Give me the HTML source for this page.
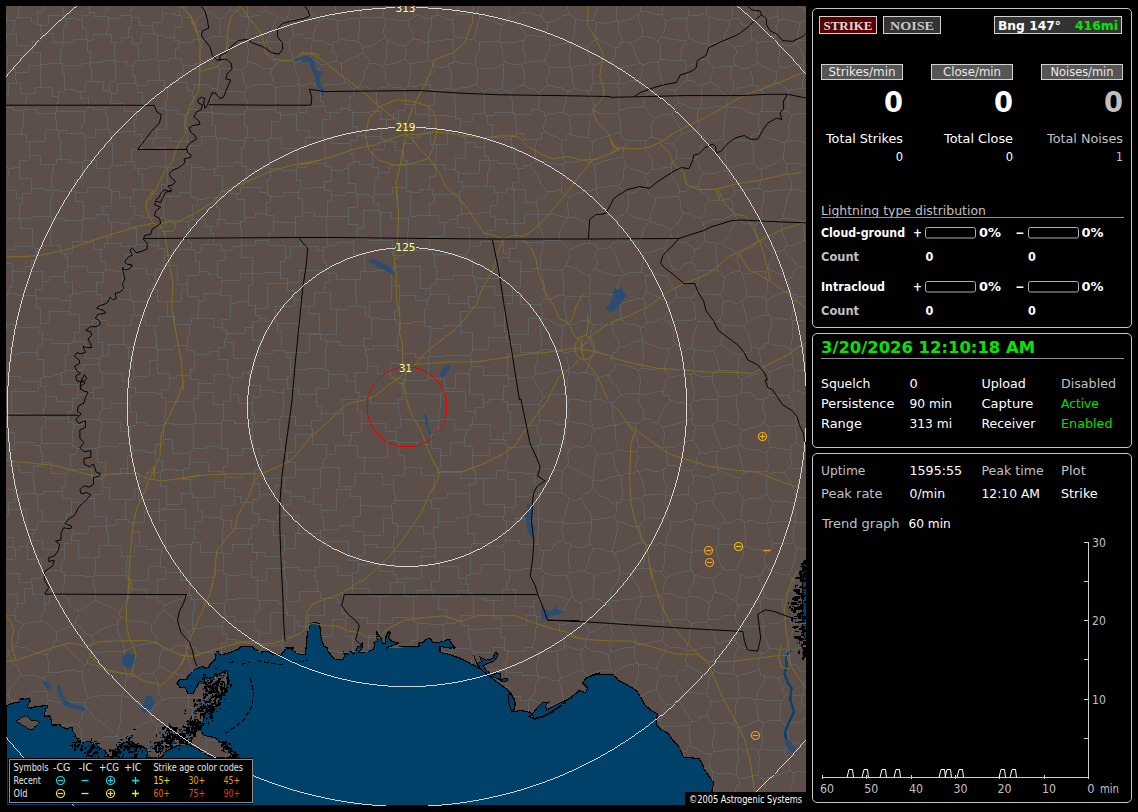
<!DOCTYPE html>
<html><head><meta charset="utf-8"><title>Lightning Map</title>
<style>html,body{margin:0;padding:0;background:#000;overflow:hidden}svg{display:block}text{white-space:pre}</style></head>
<body>
<svg width="1138" height="812" viewBox="0 0 1138 812">
<defs><clipPath id="mapclip"><rect x="6" y="6" width="800" height="800"/></clipPath><mask id="rm" maskUnits="userSpaceOnUse" x="0" y="0" width="812" height="812"><rect width="812" height="812" fill="#fff"/><rect x="395" y="2" width="21" height="10"/><rect x="395" y="123" width="21" height="9"/><rect x="396" y="243" width="20" height="9"/><rect x="399" y="363" width="14" height="9"/></mask></defs>
<rect width="1138" height="812" fill="#000"/>
<g id="map" clip-path="url(#mapclip)" shape-rendering="crispEdges">
<rect x="6" y="6" width="800" height="800" fill="#5c4f4a"/>
<path d="M6.0 706.0 L10.5 703.9 L14.8 702.5 L18.3 702.5 L20.4 699.0 L24.6 699.0 L28.8 698.3 L30.2 701.1 L28.1 704.6 L27.4 707.4 L30.9 708.1 L35.9 706.7 L42.2 706.0 L45.7 705.3 L47.8 705.3 L47.8 707.4 L45.7 708.8 L45.0 713.1 L44.3 715.9 L49.9 715.9 L51.3 720.8 L51.3 725.0 L56.3 725.0 L60.5 724.3 L60.5 726.4 L67.5 729.2 L70.3 727.1 L72.4 727.8 L72.4 731.3 L75.2 734.1 L75.9 737.0 L78.1 740.5 L81.6 742.6 L84.4 743.3 L87.2 741.2 L90.0 741.9 L92.8 743.3 L96.3 744.0 L98.5 747.5 L101.3 748.9 L104.8 750.3 L106.2 753.1 L104.1 756.7 L113.9 756.7 L114.6 750.3 L119.5 747.5 L121.0 744.0 L126.6 741.9 L132.2 741.2 L135.0 744.7 L140.6 745.4 L146.3 748.9 L147.7 753.1 L146.3 757.4 L149.6 757.7 L160.8 757.7 L167.2 750.5 L176.8 745.7 L188.0 744.1 L197.7 748.9 L207.3 755.3 L215.3 757.7 L236.1 757.7 L229.7 752.1 L226.5 744.1 L220.1 742.5 L215.3 737.7 L207.3 736.1 L202.5 734.5 L200.9 726.5 L204.1 716.9 L208.9 710.5 L216.9 704.1 L221.7 696.1 L226.5 688.0 L228.1 678.4 L227.3 670.4 L223.3 672.0 L216.9 675.2 L210.5 678.4 L204.9 677.6 L204.1 683.2 L199.3 681.6 L196.1 688.0 L192.9 693.7 L188.0 693.7 L185.6 688.0 L180.0 687.2 L176.8 683.2 L179.2 680.0 L186.4 679.2 L189.6 674.4 L194.5 669.6 L202.5 666.4 L207.3 668.8 L210.5 664.0 L215.3 659.2 L216.1 655.2 L213.7 652.8 L218.5 651.2 L220.1 655.2 L229.7 652.8 L239.3 648.8 L240.9 646.4 L252.1 646.4 L255.3 649.6 L261.7 652.0 L268.1 651.2 L272.9 654.4 L280.9 655.2 L284.1 651.2 L285.7 648.0 L293.7 648.0 L290.0 648.0 L294.8 651.6 L299.6 654.1 L305.2 654.1 L306.0 648.0 L306.8 638.4 L307.9 631.2 L310.8 624.0 L313.2 622.1 L319.6 624.0 L320.4 632.0 L321.6 640.0 L324.0 646.4 L327.2 647.6 L328.4 651.6 L332.9 657.3 L335.6 659.6 L342.9 659.6 L344.5 656.1 L343.7 652.0 L347.3 654.5 L350.5 651.2 L353.3 654.1 L356.0 650.9 L357.3 647.2 L360.5 646.1 L362.4 642.9 L362.9 646.4 L358.9 652.9 L366.9 651.6 L373.3 649.6 L374.9 644.8 L374.1 642.4 L377.3 640.8 L376.5 632.0 L378.1 634.4 L380.5 637.6 L382.9 643.2 L385.3 643.2 L386.1 636.0 L388.5 631.2 L390.1 632.8 L388.5 638.4 L392.5 641.6 L398.9 643.2 L392.5 645.6 L386.1 648.0 L402.1 646.9 L411.7 646.1 L419.7 646.9 L418.1 643.2 L422.9 642.4 L427.7 638.4 L430.9 639.2 L432.5 642.4 L438.9 642.4 L443.7 640.8 L450.0 639.2 L449.6 640.8 L455.2 648.0 L449.6 648.0 L440.0 646.4 L440.0 652.0 L449.6 654.5 L460.8 658.5 L472.0 664.1 L481.6 669.7 L488.0 675.3 L494.5 680.1 L500.9 684.9 L507.3 689.7 L510.5 692.9 L513.7 697.7 L515.3 704.1 L514.5 708.9 L511.3 712.1 L520.1 710.5 L529.7 712.1 L532.1 714.5 L528.9 716.1 L534.5 719.3 L542.5 716.9 L552.1 712.1 L560.1 706.5 L569.7 698.5 L579.3 690.5 L585.7 692.9 L587.3 688.1 L582.5 683.3 L585.7 678.5 L592.1 674.5 L600.0 672.9 L590.0 676.8 L596.4 674.4 L606.0 674.4 L613.2 674.4 L618.8 680.8 L628.4 685.6 L636.4 690.4 L641.2 697.7 L645.3 705.7 L652.5 711.3 L657.3 713.7 L656.5 724.9 L660.5 728.9 L668.5 733.7 L673.3 740.9 L678.1 745.7 L681.3 752.1 L683.7 757.7 L689.3 757.7 L698.9 758.5 L702.1 763.3 L704.5 770.0 L714 783 L712 791 L714 806 L6 806 Z" fill="#00416a" stroke="#000" stroke-width="1.2" stroke-linejoin="round"/>
<path d="M802 575 L806 572 L806 640 L803.5 634 L802 615 L802.5 595 Z" fill="#00416a" stroke="#000" stroke-width="1"/>
<path d="M12 271V287H9V293M12 271V263H6M6 297H7V293H9M95 600L90 604L84 608L77 611M95 600V588H93V576M77 611L71 607L68 599L62 595M93 576H83V575H64M62 595V585H64V575M513 696H520V700H528M528 700V712M35 295V289H42V281M35 295H17V293H9M12 271H25V266H31M42 281V271H31V266M6 249H15V246H32M32 246H34V248H36M31 266V260H36V248M32 246V228H20V218M51 218V217H50V216M51 218V227H50V245M50 245H42V248H36M50 216H32V218H20M6 221H9V218H19M20 218H19M15 615L16 620L20 622L23 625M15 615L14 611L17 607V603M23 625L29 622H35L41 621M17 603H24V588H32M41 621L42 615L45 610L44 604M44 604V594H32V588M6 594H17V603M6 615H15M57 632L52 628L47 623L41 621M57 632L56 639M15 646L18 639L19 631L23 625M15 646L26 648L36 653L47 655M56 639L53 645L50 650L47 655M31 582H19V573H6M31 582V584H32V588M77 611L79 615L75 619V623M75 623L69 627L63 629L57 632M62 595H49V604H44M64 575V572H61V570M61 570H48V572H41M41 572V578H31V582M15 646H11L12 651H8M8 651L6 650M165 546H162V549H161M165 546H176V544H191M190 577V553H191V544M190 577V579H189V580M161 549V555H160V566M160 566V567H165V572M189 580H180V572H165M56 639L66 647L75 656L85 665M47 655L48 661V666L49 672M49 672H60L70 670L82 672M82 672L85 665M75 623L81 627L85 633L92 636M92 636L94 642L90 647L92 653M92 653L90 656L88 659L87 663M87 663L85 665M92 653L103 652L114 651H125M87 663L100 667L112 672L126 674M126 674L125 666L124 659L125 651M163 700L158 692V682L153 673M163 700L171 698L179 697H188M188 694V697M186 679L182 676L170 672L159 666M159 666L158 670L155 671L153 673M152 720L151 717L150 714L152 711M152 720L141 725L131 733L120 739M152 711L141 707L133 699L121 695M117 736L120 739M117 736L120 723L121 710V696M189 725L178 726L167 727L156 725M189 725V722H192V720M156 725L152 720M192 720V707H188V697M163 700L158 703L154 706L152 711M127 676L136 677L144 673H153M127 676L125 682V689L121 695M117 736L106 726L94 717L84 705M84 705V703M84 703L88 698M88 698L98 696L109 695L121 696M88 698L85 690L83 681L82 672M126 674L127 676M130 580H148V566H160M130 580V583H132V589M165 572V579H157V597M132 589H146V597H157M413 617V605V596M413 617H392V623H379M379 623V606H380V596M380 596H390V582H397M413 596H404V582H397M507 651V662H505V669M507 651V650H504V647M504 647H493V652H473M505 669H487V675M473 652V659H471V664M509 691V687H506V672M506 672V670H505V669M352 651H356M360 651H368V635H377M352 651V636H345V619M345 619V618H346V617M346 617H367V623H378M378 623V630H379V635M413 617V621H417V623M417 623V640H411V646M389 647H403M710 701L711 707L708 711L707 717M710 701H720L728 698L738 699M738 699L735 707V716L734 725M734 725L727 722L720 724L713 723M707 717L709 719L710 722L713 723M759 720L757 714V707L754 700M759 720L752 723L745 726L737 728M737 728L734 725M740 697H745L750 698L754 700M740 697L738 699M528 700H529V699H530M559 707L550 705L540 703L530 699M6 177H8V168M8 168H7V167H6M22 198V204H19V218M22 198H16V190H6M22 198V193H31V188M31 188V178H19V167M19 167H14V168H8M108 545H99V557H95M108 545H121V556H127M126 575V561H127V556M126 575H105H94M94 575V571H95V557M106 526V532H108V545M106 526H88V533H73M71 540V535H73V533M71 540H78V557H95M106 525H116V519H125M125 519H128V522H132M132 522V531H139V546M139 546H134V556H127M130 580V578H126V575M139 546H146V549H161M95 600L103 604L111 607L119 612M93 576H94V575M119 612L124 605L129 598L132 589M61 570V561H64V549M64 549V543H71V540M61 726L69 724H78M78 724L81 730V737L82 743M117 736L105 737L95 743H92M84 705L83 712L82 718L78 724M121 744L120 743V739M47 716L45 712M84 703L73 702L61 703L49 700M46 705V703L49 700M724 569L720 563L718 556L716 549M724 569L728 571L732 569L736 570M716 549L718 545M736 570L739 563L743 556L744 548M744 548L736 545L727 544L718 545M662 726L660 721M662 726H671H680L689 725M660 721L662 716L664 710L666 704M689 725L692 722M692 722L688 715L683 708L679 700M679 700L675 702L671 705L666 704M706 693L699 694L691 692L683 693M706 693L707 696L710 698V701M692 722L697 721L701 716L707 717M679 700L683 693M640 696H642L649 692L656 689M660 721L657 720M666 704L661 700L659 694L656 689M804 240H806M804 240V234L803 228V222M803 222L806 220V219M444 388V378H428V358M444 388H455V373H469M469 373V369H471V366M471 366V359H470V355M470 355H445V356H429M429 356H428V357M252 403V397H260V390M252 403V415H254V422M254 422H267V419H279M260 390H274V392H283M283 392V410H282V416M282 416H280V419H279M326 413H342V399H357M326 413H343V435H351M357 399V411H361V423M351 435V432H361V423M321 413V406H316V394M321 413V420H311V425M283 392V389H287V388M311 425H295V416H282M287 388H298V394H316M165 546V520H159V511M132 522H144V511H159M192 672V669L188 658L186 647M163 649L160 655L159 660V666M163 649L170 650L177 645L185 646M186 647L185 646M189 580V591V595M157 597L158 601L162 602L164 606M189 595L181 599L172 602L164 606M157 758L158 755L157 750M185 745L178 744L169 745L160 744M157 750L160 744M189 725L186 732L188 738L187 744M156 725V732L160 737V744M147 751L157 750M117 624L118 633L123 642L125 651M117 624V621L120 619V616M120 616L130 621H141L152 625M125 651L135 646L145 644L156 642M156 642V636L151 631L152 625M92 636L99 631L107 627L117 624M119 612L120 616M163 610L164 606M163 610L158 614L156 620L152 625M163 649L161 646L159 644L156 642M185 646L186 641L188 637L189 632M189 632L180 625L172 617L163 610M380 596H369V588H352M346 617V613H342V602M342 602V594H352V588M393 571H379V564H358M393 571V574H396V578M358 564V572H352V575M396 578V579H397V582M352 575V579V588M393 571V560H394V551M358 564V562V560M358 560V555H364V544M364 544H376V547H393M394 551V549H393V547M431 590V581H439V566M431 590H417V596H413M396 578H421V556H435M435 556V561H439V566M394 551H423V548H435M435 556V554V548M431 590H433V596H438M439 566H458V578H466M466 578V584H468V590M468 590H458V596H438M358 560H348V541H323M352 575H337V566H319M323 541V547H319V566M342 602H337V598H324M324 598H320V591H317M317 591V581H315V570M319 566V567H315V570M286 601V579H284V568M286 601H299V591H317M315 570H298V567H284M308 631V626M286 648H282V645M296 652H299V653H305M282 645V636H294V621M308 626H298V621H294M345 619H332V636H321M324 598V615H308V626M350 652H337V650H328M286 601V602H285V603M285 603V609H287V612M287 612V615H294V621M259 633H270V612H287M259 633V638H258V641M282 645H274H261M258 641V643H261V645M561 493L565 494L567 496L569 498M561 493L554 492H547L539 495M569 498L567 507L565 515L562 523M562 523L554 522L546 521L538 518M538 518V510L539 503V495M483 402V407H475V411M483 402V394H469V373M444 388V389H443V391M475 411H465V391H443M475 478H460V472H437M475 478V470H472V455M440 455V467H437V472M440 455H450V442H464M464 442V446H472V455M438 420V434H431V444M440 455V448H431V444M438 419H454V429H466M464 442V436H466V429M475 411V417H472V424M438 419V409H440V394M443 391V393H440V394M466 429H470V424H472M806 192L802 191L797 189L791 190M803 222L797 220L790 219L783 218M783 218L785 208L787 199L791 190M554 620L558 613L565 608L569 600M554 620L548 618L543 616L537 617M569 600L560 597L550 595H540M535 615L534 612L535 609L533 606M535 615L537 617M533 606L534 601L539 599L540 595M501 625V618H493V600M501 625H526V615H535M493 600H502V589H506M506 589H515V606H533M532 647L535 638L536 628L537 617M532 647H525V651H507M501 625V627H500V628M500 628V637H504V647M564 646L570 647L576 649H582M564 646V638L559 632V625M559 625L566 624L573 622L581 620M582 649L585 647M585 647V642L587 637L590 633M581 620L584 624L588 628L590 633M538 518L539 527L537 535V544M538 518H515V521H506M506 521V530H505V540M537 544H519V540H505M737 728L739 734L737 741L739 748M739 748L737 750M713 723L715 732L712 742L714 752M737 750L729 749L722 751L714 752M689 725V732L690 739L691 746M691 746L698 749L703 753L711 754M714 752L711 754M759 720L763 723M763 723L761 732L763 741L761 749M739 748L745 751L752 748L758 751M761 749L758 751M532 647L538 652M554 620L559 625M564 646L563 649H560L557 651M538 652L544 651H551H557M506 672H522V675H538M538 652V660L536 667L538 675M530 699L535 693V685L539 678M538 675L539 678M100 249H93V241H81M100 249V261H105V269M105 269V272H103M103 272H87V266H67M81 241H72V253H65M65 253V256H67V266M101 298V294H96V291M101 298H119V299H130M96 291V282H103V272M130 299V289H122V271M122 271H113V269H105M72 293H82V291H96M72 293V282H64V276M64 276V271H67V266M51 218H64V220H82M50 245H60V253H65M82 220V232H81V241M42 281H49V276H64M156 137H170V141H187M156 137V129H166V110M187 141V128H184V114M166 110H177V114H184M134 131H124V132H110M134 131V134H141V139M141 139V149H131V161M110 132V143H112V165M112 165H125V161H131M153 138V147H165V166M153 138H146V139H141M131 161H134V168H138M165 166H149V168H138M153 138H155V137H156M187 141V142H189V145M167 167H166V166H165M167 167H181V163H187M187 163V153H189V145M136 111H140V105H142M136 111V119H134V131M166 110V109H165V108M142 105H156V108H165M29 141V150V155M29 141H26V134H21M29 155V160H19V167M21 134H10H6M23 110H13V107H6M23 110V127H21V134M52 190H60V191H74M51 190V174H53V164M74 191V179H82V162M82 162H69V159H60M60 159H56V164H53M50 216V198H52V190M31 188H45V190H51M29 155H40V164H53M29 141H45V129H56M56 129H57V130H58M58 130V139H60V159M56 129V119H55V113M23 110H24V109H25M55 113H36V109H25M198 383V387V392M198 383H214V374H227M198 392H213V404H223M227 374H229V377H232M232 377V384H230V394M230 394V401H223V404M249 372H242V377H232M249 372V385H260V390M252 403H238V394H230M133 376V358H128V347M133 376H149V360H157M128 347H149H156M156 347V349H157M157 360V354V349M193 401V398H198V392M193 401H186H165M198 383V379H190V375M190 375H176V378H169M169 378V389H161V393M161 393V397H165V401M133 376V379H130V381M130 381V387H135V392M169 378V373H157V360M161 393H155V392H135M125 519V509V499M159 511V499H138V488M125 499H134V488H138M106 525V516H94V498M125 499H109V487H102M94 498V494H102V487M139 481V484H138V488M139 481V473H127V468M127 468H120V474H105M105 474V477H102V478M102 487V480V478M36 298H59V300H70M36 298V307H40V323M40 323H49V311H69M70 300V307H69V311M35 295V296H36V298M72 293V295H70V300M190 375V369H194V354M157 349H174V345H187M194 354V350H187V345M227 374V359H218V351M194 354H210V351H218M220 293V295H230V303M220 293H204V301H198M230 303V319H222V327M198 301V313H197V318M197 318H213V327H222M225 250V260H217V274M225 250H221V244H213M213 244H201V252H195M195 252V261H199V271M217 274H208V271H199M221 280H240V273H252M221 280V277H217V274M252 273V257H241V246M241 246H232V250H225M8 651L9 655M6 658L9 655M646 544L644 552L645 560L642 568M646 544L653 546L660 543L666 545M642 568H649L655 571L661 572M661 572L665 563L664 554L666 545M691 570L690 565V559L692 553M691 570L682 572L674 574L666 578M661 572L666 578M667 545L675 546L683 550L691 553M631 574L634 581L639 587L641 596M631 574L627 573H623L620 571M620 571L618 581L611 590L610 601M641 596L631 599L621 600L610 601M582 670L575 672L568 676L561 678M582 670L587 676M564 701L562 694L561 687L559 680M564 701H567M561 678L559 680M582 649L580 656L583 663L582 670M557 651V660L558 669L561 678M560 706V705L563 704M565 703L564 701M539 678L546 677L552 680H559M676 676L671 677L666 676L661 675M676 676L679 671L685 670L687 665M687 665L685 660L688 655L686 650M657 669L659 661L664 654L666 645M657 669L661 675M666 645L672 648L679 647L686 650M683 693L681 687L677 682L676 676M656 689L657 684L658 679L661 675M706 693L708 687L709 681V675M709 675L702 673L694 670L687 665M585 647L592 651H600L608 655M587 676L595 673L602 670H610M608 655L609 660L610 665V670M695 575L700 577H707L713 579M695 575L694 582L690 588L689 596M689 596L696 597L702 599L708 602M713 579V584L715 588V592M715 592L712 595V600L708 602M724 569L721 573L717 576L713 579M716 549L708 552L699 550L692 553M691 570L695 575M736 570L741 575M741 575L740 583L738 592L736 601M736 601L729 598L723 594L715 592M709 619L707 613L710 607L708 602M709 619L718 620L726 615H736M736 615L735 612L739 609L738 606M736 601L738 606M764 627L762 618L760 610V601M760 601L753 604H746L738 606M736 615L735 619L737 623L740 626M740 626L748 627L756 626L764 627M736 641L739 646M736 641L729 640L723 642L717 644M739 646L735 655L734 664L733 673M717 644L715 647M715 647L714 655V663L715 671M733 673L727 674L721 673L715 671M740 626L741 631L735 635L736 641M764 627L763 634L767 641L769 648M769 648L767 651L765 653H762M762 653L754 651L747 649L739 646M706 622L711 629L715 636L717 644M706 622L709 619M736 676L744 674L752 672L759 669M736 676L733 673M759 669L758 663L760 658L762 653M692 624L697 622L702 623L706 622M692 624L690 632L689 641L686 650M686 650H696L705 647H715M709 675L715 671M740 697L738 690L739 683L736 676M741 575L746 577H752L758 576M760 601L764 597M758 576L761 583L763 590L764 597M795 502L796 500M795 502L794 508L796 515L795 522M796 500L801 497L806 498M795 522H802L806 523M794 390L793 383L794 377L795 370M794 390L801 392L806 394M806 370H803H795M788 395H782H776H770M788 395L794 390M770 395L769 388V380V372M769 372L776 369L784 366L792 364M792 364L795 370M792 364L793 360L792 355L791 350M806 346H798L791 350M790 349L792 340V330V320M790 349L791 350M806 322L801 320H792M769 343L768 335L771 326L772 318M769 343L776 346L783 345L790 349M772 318H778L785 320L791 318M791 318L792 320M784 472L789 468M784 472L789 480L794 490L796 500M789 468H797L805 469H806M770 395L764 400M769 372L766 369M764 400L756 399L750 392H742M742 392L741 388L743 384L741 380M741 380L749 376L758 374L766 369M769 343L765 344L763 348H758M766 369L761 363L760 355L758 348M744 327L748 333L750 340L752 347M744 327L747 322M747 322L754 318L761 316L769 315M772 318L769 315M758 348L752 347M795 425L802 423L806 422M795 426L796 431V437V443M796 443L803 447L806 448M788 395L793 404L795 414V425M789 468L792 462L790 455L791 449M791 449V446L794 444L796 443M739 444L741 440L740 435L743 431M739 444L747 449L757 450L766 453M743 431L750 428L757 427L764 423M766 453L770 447M770 447L768 440L770 433L768 426M768 426L764 423M737 446L740 455L742 464L744 473M737 446L739 444M744 473L752 471H760L767 472M767 472L769 466L767 460L766 453M737 424L739 426L740 429L743 431M737 424L739 414L736 405L737 395M764 400L762 407L766 415L764 423M737 395L742 392M784 472H779L773 473H768M791 449H784L777 448L770 447M795 426L786 425L777 426H768M617 521L624 523L631 526H639M617 521V531L615 541L612 551M612 551L614 553M614 553L624 550L633 545L642 542M642 542L640 536V531L639 526M646 544L642 542M642 568L638 569L634 570L631 574M620 571L619 569M619 569V563L617 558L614 553M581 498L584 494L590 492L592 487M581 498L584 505L590 512L592 520M592 487L599 495L608 499L616 506M592 520L600 519L607 518L614 516M614 516L616 513V510V506M786 142L790 134L788 125L792 116M786 142L792 140L798 141L805 143M792 116L799 113H806M806 145L805 143M313 501V504H321V510M313 501H304V496H290M290 496V504H283V515M283 515H298V533H317M321 510V517H323V529M323 529V530H320V532M317 533H318V532H320M312 434H295V452H287M312 434V444H326V454M326 454V458H323V467M295 469V462H287V452M295 469H305H320M320 469H321V467H323M311 425V429H312V434M281 449H283V452H287M281 449V439H279V419M349 445H335V454H326M349 445V440H351V435M321 413H324H326M284 485V491H290V496M284 485V477H295V469M313 501V488H320V469M350 489V488V486M350 489H336V510H321M350 486H339V467H323M221 280V289H220V293M230 303H237V301H248M252 273V285H248V301M283 515H277V521H273M317 533H295V548H284M273 521V535H284V548M226 575V573H223V570M226 575H240V574H251M223 553V565V570M223 553H232V544H248M251 574V561H256V552M248 544H252V552H256M251 574V577H257V580M257 580H266V568H284M284 567V561H281V556M256 552H265V556H281M323 541V537H320V532M284 548V552H281V556M287 388V381V379M316 394V388H328V374M325 368V370H328V374M325 368H307V369H290M290 369V376H287V379M249 372V371H253V366M287 379H268V366H253M162 509V508H166V504M162 509H160V511H159M139 481H146V472H160M166 504V486H160V472M189 595H191V599H194M189 632V630H192V628M194 599V610H192V628M186 647H196V652H216M219 652H221M226 639V643H221V652M226 639V634H222V626M192 628H202V626H222M192 720H203M188 697H208V705H216M202 752H206V740H218M225 758V756V749M225 749V744M223 743H220M393 547V536H397V526M435 547V540H433V533M433 533H423V526H397M470 547V561V573M470 547H471V543H474M474 543H488V546H502M470 573H481V564H504M504 564V551H502V546M435 547H446H470M466 578V575H470V573M467 517V533H474V543M467 517H456V521H438M438 521V527H433V533M493 600H485V598H473M506 589V582H509V570M468 590V593H473V598M509 570V569H504V564M441 650V651H443V652M441 650V647M443 641V624M443 652H452V648M455 648H470M443 624H444V623H446M446 623H456V621H461M461 621V625H468V629M468 629V638H470V648M417 623H430V624H443M473 652V650H470V648M438 596V609H446V623M473 598V615H461V621M500 628H483V629H468M254 621V611H259V600M254 621H234V616H225M225 616V612H224V603M257 598V600H259M257 598H237V599H226M226 599V602H224V603M259 633V630H254V621M285 603H278V600H259M226 639H235V641H258M222 626V621H225V616M194 599H203V603H224M257 580V589V598M226 575V589V599M223 570H215V577H190M507 472V479H515V496M507 472H523V473H535M515 496H529V494H539M535 473L534 480L538 487L539 494M561 493V485L562 478L563 470M563 470L555 471L547 468H538M538 468L535 473M483 478V504H504V514M483 478H481H475M475 478V484H469V493M469 493V502H470V514M470 514H479V516H503M504 514V515H503V516M505 470H507V472M505 470H496V478H483M515 496V507H504V514M433 498V482H434V475M433 498H447V493H469M434 475H436V472H437M467 517V515H470V514M433 498V499H431V500M431 500V508H438V521M506 521V520H503V516M505 540V544H502V546M396 440V441H398V442M396 440H387V457H364M398 442V455H404V467M364 457V463V473M364 473H382V484H393M393 484V475H404V467M438 420H410V419H400M395 431V436H396V440M395 431V427H400V419M431 444H417V442H398M349 445H357V457H364M361 423H385V431H395M434 475H421V467H404M350 486H355V473H364M431 500H417H395M395 500V494H393V484M503 439V440H505V443M503 439V433H510V425M510 425H520H538M507 447H522V446H538M507 447V444H505V443M538 425L537 431L541 437L540 444M538 446L540 444M472 455H489V443H505M472 424H490V439H503M483 402H489V399H503M507 404V401H503V399M507 404V411H510V425M507 404H521H539M539 404L540 409L539 414L540 420M540 420L538 425M505 470V461H507V447M538 468V461V454V446M540 420H549L557 424H566M566 424V431L565 438L564 445M564 445L556 444H548H540M563 470L567 466M567 466L569 461L567 455L569 450M569 450L564 445M471 366H483V375H507M503 399V386H508V378M507 375V376H508V378M539 404L543 398M543 398L541 390L536 385L533 377M508 378H517V377H533M568 370L569 372M568 370H557L546 373L535 374M543 398L550 395L557 394H564M564 394L567 387V379L569 372M535 374L533 377M590 402L583 401L576 399H569M590 402V410L591 419L593 427M569 399L567 406L570 413L568 421M593 427L585 424L577 423L568 421M564 394L569 399M586 372L580 373H575L569 372M586 372L590 374L593 375L596 379M594 399L596 392V386V379M594 399L590 402M566 424L568 421M569 450L575 446L583 448L589 445M594 429L592 434L591 440L589 445M594 429L593 427M470 355V353H472V349M429 356V342H430V328M472 349V332H460V325M460 325H444V328H430M428 357H415V353H402M399 323H413V321H424M399 323V335H397V345M397 345V350H402V353M430 328V326H424V321M363 345V346H365V349M363 345V338H371V318M399 323H396V319H394M365 349H373V345H397M371 318H380V319H394M791 189L782 190L773 191H763M791 189V180L786 172V163M786 163L783 158M783 158L776 163L769 166L761 169M761 169V175V181L759 188M759 188L763 191M806 165H804L796 163H786M784 143L785 148L783 153V158M784 143L786 142M679 748L684 751M684 751L683 756M662 726V730M691 746L688 747L687 751H684M736 775V767L739 758L737 750M736 775L739 779M758 751L760 759L758 767V775M758 775L752 776L745 778L739 779M736 775L728 773L720 774L712 771M717 795L714 792M717 795L723 794L729 795L735 793M739 779V784L736 788L735 793M714 792L713 786M713 781L712 778V771M711 754L710 759L709 763V767M712 771L709 767M709 767L704 769M717 795L716 803V806M714 792L712 793M774 502L770 500L769 497L767 494M774 502L771 508L770 516L766 523M767 494L760 498H751L743 501M766 523H759L751 520L744 522M743 501L742 507L741 513V520M744 522L741 520M768 473L766 480V487L767 494M795 502H788L781 501L774 502M767 523L776 522L785 521L795 522M102 214V206H111V191M102 214H96V218H83M75 192V201H83V218M75 192H87V187H109M109 187V189H111V191M82 220V219H83V218M107 243V237H111V222M107 243H104V249H100M111 222H108V214H102M74 191H75V192M109 168V175V187M109 168H96V160H85M85 160H84V162H82M111 222H120V223H129M129 223V218H134V215M111 191H119V197H130M134 215V206H130V197M109 168H110V165H112M138 168V174H142V189M130 197H133V189H142M167 167V184H161V193M142 189H150V193H161M156 347V334H154V325M187 345V336H189V324M189 324H174V316H167M154 325H158V316H167M122 271H124V268H126M107 243H121V246H133M126 268V254H133V246M129 223V228H136V244M136 244H135V246H133M90 62V51H87V40M90 62H103V60H114M87 40H93V34H106M114 60V50V42M106 34H111V42H114M191 249H194V252H195M191 249V242H188V221M210 226H205V219H192M210 226V233H213V244M188 221H190V219H192M191 249H173V255H164M164 255V248H158V245M158 245V227H165V220M188 221H178V220H165M134 215H141V217H163M161 193V195H163V196M163 196V210V217M158 245H151V244H136M165 220V218H163V217M187 163V164H191V167M163 196H180V192H190M191 167V180H190V192M192 219V205H197V199M190 192V197H197V199M236 193V199H244V217M236 193H229V191H222M222 191H220V197H216M216 197V207H219V219M219 219H225V223H240M240 223V221H244V217M191 167H202V169H214M214 169V175H222V191M197 199H206V197H216M210 226H217V219H219M241 246V245M241 245V229H240V223M268 240H255V245H241M268 240V233H273V221M273 221V215H266V213M266 213H255V217H244M184 114H188V109H193M165 108V99H167V87M193 109V96H192V90M192 90H187V82H177M167 87H171V82H177M85 160V143V137M58 130H66V133H81M85 137H84V133H81M110 132H109V129H107M85 137H95V129H107M6 95H8V83H16M15 72V79H16V83M15 72V69H7V64M25 109V102H26V93M26 93H20V83H16M40 65H28V72H15M40 65V78V87M40 87H35V93H26M41 33V29H40V25M41 33V41H32V45M37 22H31V17H18M37 22V24H40V25M12 34V29H14V20M12 34H16V45H25M25 45H28H32M18 17H16V20H14M60 63H49V64H40M60 63V49H62V42M40 64V52H32V45M62 42H53V33H41M20 6V7H18V17M43 6V11H37V22M6 43V34H12M6 14V20H14M7 64V55H25V45M40 64V65M40 87H52V96H58M55 113V112H56V111M58 96V103H56V111M60 63H62V65M62 65V74H64V89M58 96V91H64V89M81 133V125H84V111M56 111H64H84M193 401V410H195V423M195 423H193V424M165 401V416H164V423M193 424H173V423H164M136 422H146V425H163M136 422V412H130V403M135 392V395H130V403M164 423V424H163V425M195 423H209H221M193 424V433V448M193 448H206V446H221M221 446V436V423M254 422H252V423M223 404V409V420M252 423H234V420H223M223 420V421H221V423M191 544H192V542H193M162 509H185V528H194M194 528V539H193V542M223 553H222V552M193 542H200V552H222M73 533V529H66V521M94 498H84V502H71M66 521V514H71V502M130 381H122V373H102M102 373V387H93V392M130 403H110V408H102M102 408V398H93V392M101 422V431H99V446M101 422H120V431H130M99 446H118V443H129M130 431V436H129V443M136 422V425H130V431M102 408V411H99V419M99 419V421H101V422M132 450V445H129V443M132 450V455H127V468M105 474V462H97V448M97 448V447H99V446M6 331V324M6 322V324M38 327V326H40V323M38 327H17V324H6M99 320H107V325H123M98 320V342H102V355M123 325V337V344M123 344H108V355H102M101 298V308H99V320M69 311V314H79V324M79 324H92V320H98M130 299H131V301H133M134 315V306H133V301M134 315H131V325H123M128 347H126V344H123M134 315H145V325H154M65 370V354H68V343M65 370H83V364H99M99 364V361V358M99 358H85V341H74M74 341H72V343H68M102 373V371H99V364M61 374V372H65V370M61 374V384H77V394M93 392H87V394H77M102 355V356H99V358M79 324V332H74V341M38 327V332H42V339M42 339H52V343H68M226 333V339H224V342M226 333H245V327H252M224 342H233V358H255M252 327V340H260V353M260 353V355H255V358M218 351V347H224V342M189 324H191V318H197M222 327V329H226V333M259 318V315H255V308M259 318V321H252V327M248 301V305H255V308M253 366V364H255V358M290 369V357H286V352M281 350H285V352H286M281 350H273V353H260M12 701L20 700M24 699L33 692L45 691M12 701L8 696M8 696L10 688L16 682L21 675M21 675H28L36 676L44 679M44 679V683V687L45 691M13 703L12 701M49 700L47 697L48 693L45 691M6 695L8 696M9 655L12 662L18 667L21 675M49 672L46 673L44 675V679M716 494L713 489V483L710 478M716 494L723 492L730 494L737 491M737 491V486V482L740 478M740 478L732 477L726 473L719 470M719 470L717 474H712L710 478M744 473L740 478M743 501L742 497L740 494L737 491M737 446L732 447L727 448L722 449M722 449L718 452M718 452L716 458L717 464L719 470M696 504L701 502L706 501L712 500M696 504V510L694 514L692 519M695 524L692 519M695 524L703 525L711 526L719 529M712 500L715 508L722 514L726 522M719 529L721 527L722 523L726 522M670 522L677 521H684L692 519M670 522L671 530L666 537L667 545M691 553V543L693 533L695 524M718 545L719 540L718 535L719 529M741 520L736 519L732 522H726M716 494L712 500M746 546L744 548M746 546L745 538V530L744 522M569 498L573 500H577L581 498M562 523L563 524M592 520L591 522M563 524L572 523H581L591 522M594 548L590 544M594 548L600 549L606 551H612M617 521L614 516M591 522L592 530L589 537L590 544M540 595L543 588L542 580L545 573M509 570H522V568H541M545 573L541 568M537 544L540 546V550L543 551M541 568L542 562L543 557V551M563 524L561 530L564 535L563 540M543 551L551 550L556 543L563 540M590 544L584 547H577L571 545M563 540L565 543H569L571 545M585 570H580L575 572L569 573M585 570L587 573L591 574L594 577M594 577L593 584V591L594 599M567 575L569 573M567 575L569 582L571 590L573 597M573 597L575 600L578 602H582M582 602L586 600L589 598L594 599M594 548L590 555L588 563L585 570M571 545L568 554L569 564V573M619 569L611 572L602 573L594 577M608 603L610 601M608 603L603 602L599 599H594M545 573L552 575H559H567M569 600L573 597M581 620L583 614L581 608L582 602M692 624L687 620M689 596L686 599M686 599L687 606L686 613L687 620M666 578L665 583L663 588V593M686 599L678 597L671 594L663 593M642 596L648 597L654 596L661 595M663 593L661 595M666 645L662 640M687 620L679 619L672 620L665 621M662 640L664 634L662 627L665 621M661 595L664 603L662 612L664 621M642 596L640 604L636 611L635 620M664 621H655L645 619L635 620M638 664V675L635 685L634 689M638 663L629 665L621 668L614 673M614 673V676M657 669L651 668L645 664H638M610 670L614 673M754 700L756 699M759 669L760 672L761 675L765 676M756 699L758 691L763 684L765 676M767 523L769 530L770 537L773 544M795 522L793 530V537L794 544M773 544L780 543H787L794 544M746 546L752 549H760L766 553M773 544L772 548L769 551L766 553M758 576L762 574L763 570L766 567M766 553L764 558L765 562L766 567M790 291V287L789 283L787 280M790 291L792 294H796L798 297M806 296L805 297L802 296L798 297M787 280L792 277L794 271L798 268M798 268L802 266L806 268M769 315L766 310V305L767 300M767 300L774 296L782 293L790 291M791 318L793 311L794 304L798 297M741 355L738 360L739 366L737 372M741 355L734 353L727 349L721 345M737 372L731 370L726 371L720 370M720 370L718 363L716 357L713 350M721 345L718 346L715 347L713 350M741 380L738 378V375L737 372M752 347L750 352H745L741 355M723 325L730 326L737 325L744 327M723 325L724 332L722 338L721 345M723 325L719 321M692 348L693 339L695 330L699 322M692 348L695 350M695 350H701L707 352L713 350M719 321L712 322L706 321L699 322M567 466L576 470L584 474L593 478M589 445L593 447L595 450L597 454M597 454L595 462L594 470L593 478M592 487L593 480M593 478V480M622 499L621 502H616V506M622 499L629 501L635 498L641 499M639 526L641 523L643 521L645 519M641 499L644 506V512L645 519M670 522L667 518M667 518L660 519L652 517L645 519M688 494V487L694 482L693 475M688 494L681 495H674H666M668 465L664 469M668 465H676L683 470L691 471M664 469L663 478L667 486L665 494M691 471L693 475M710 478L705 477L699 476L693 475M696 504L694 500L690 498L688 494M667 518L668 511L665 503L666 495M666 448L675 447L683 442L692 440M666 448V454L667 459L668 465M692 440L695 444L698 448L700 452M700 452L697 458L696 465L691 471M639 472L647 469L656 472L664 469M639 472L642 480L644 488L645 496M645 496L652 494L659 495L665 494M641 499L645 496M700 452L706 454L712 451L718 452M367 366H377V373H390M367 366V372H355V381M359 396V392H355V381M359 396H370V403H398M390 373V378H402V391M398 403V399H402V393M402 391V393M365 349V355H367V366M402 353V363H390V373M326 341H339V345H363M326 341V348H325V368M328 374H346V381H355M357 399V398H359V396M400 419V414H398V403M428 358V380H402V391M440 394H426V393H402M251 528V525H258V519M251 528H231V520H223M258 519V513H252V502M252 502H240V496H234M234 496V505H221V517M223 520V519H221V517M273 521H267V519H258M248 544V538H251V528M222 552V529H223V520M284 485H275V494H259M259 494V499H252V502M202 516H208V517H221M202 516V521H194V528M202 516V510H197V497M234 496V488H224V481M197 497H214V481H224M166 504H181V493H190M197 497H192V493H190M205 680H215V676M227 684H225V672M221 652V655M225 749H228M392 518V510H391V506M392 518H383V535H363M391 506H370V505H360M360 505V516H353V525M353 525V531H363V535M397 526V523H392V518M395 500V503H391V506M364 544V541H363V535M350 489V496H360V505M323 529H340V525H353M472 349H488V337H506M507 375V354H511V344M506 337V341H511V344M535 374V367L538 360L537 352M511 344H520V352H537M765 298L767 300M765 298L767 289V281L765 272M787 280L782 275L775 272L768 269M765 272L768 269M763 220H768L774 222L779 220M763 220L761 222H757L756 225M756 225L755 231L756 236L758 241M779 220L782 228L784 237L787 245M758 241L764 243L768 248L772 253M772 253L775 251L780 252L783 250M787 245L783 250M783 218L779 220M763 191L764 201L761 210L763 220M804 240L799 243L794 245H787M798 268L794 261L788 256L783 250M768 269V264L772 259V253M692 348H686L681 344L675 345M699 322L696 319M696 319L687 321L678 320L670 324M675 345L673 338V330L670 324M737 424H731L724 420L717 421M722 449L718 441L715 433L712 425M717 421L712 425M692 440L694 435L695 430V425M712 425H707H701H695M712 376H705H699L693 373M712 376L713 383L716 390L719 397M693 401L701 400L709 399H717M693 401L695 392L691 383L692 374M693 373L692 374M719 397L717 399M695 350L692 358L695 365L693 373M720 370L717 371L713 373L712 376M737 395L731 397L725 396L719 397M690 405L693 401M690 405L691 409L693 414L691 419M717 421V414L718 406L717 399M691 419L693 420L692 424L695 425M668 349L659 348L651 345L642 341M668 349V355L666 361L664 368M642 341L643 350V359L641 368M664 368L656 369H648L641 368M675 345L668 349M692 374H684L677 376H670M664 368L665 371L668 373L670 376M691 419L682 422L673 425L662 427M665 448L663 441L665 434L662 427M735 793L739 799M739 806V799M761 749L768 750H776L784 751M784 751L787 757L789 763L790 770M758 775L762 779M762 779L772 777L781 774L790 770M167 301H157V289H152M167 301H181V289H187M187 289V287V284M187 284H177V265H163M152 289V284H155V274M155 274V269H163V265M133 301H147V289H152M167 316V306V301M198 301V296H187V289M199 271V275H187V284M164 255V261H163V265M126 268H146V274H155M142 105V92H137V85M167 87H164V80H159M137 85H147V80H159M177 82V73H183V65M175 58H181V65H183M175 58H169V60H158M159 80V71H158V60M137 43V48H138V60M137 43H141V33H154M157 35V34H154V33M157 35V51V59M157 59H146V60H138M128 37H132V43H137M128 37V27H131V17M154 33V30H152V25M152 25H139V17H131M128 37H121V42H114M106 34V30H108V18M108 18H120V15H130M131 17V15H130M193 109H198V112H211M211 112V97H218V91M192 90H194V84H199M218 91L217 89M217 89L211 88L206 84H199M183 65H195V63H199M199 84V77V63M175 58V48H178V42M157 35H164V37H174M174 37V40H178V42M40 25H48V15H63M63 15V8H61V6M64 89H74V91H80M84 111H86V107H88M88 107V98H80V91M107 129V116H105V109M88 107H93V109H105M89 63H82V65H62M89 63V68H91V81M91 81H85V91H80M136 111H124V103H110M110 103V107H105V109M806 19L803 21L800 23M800 23L799 29L797 34L799 40M799 40L806 41M784 143L776 140L767 138L759 133M792 116L787 111M787 111H778H770H761M761 111L758 115M759 133V127L758 121V115M806 12L805 10L798 6M800 23L793 21L786 19H779M777 16L779 19M777 16V11L779 6M755 6L756 12L755 20M777 16L770 18L763 19L755 20M227 455H242V448H253M227 455V466H223V471M223 471V473H225V477M225 477H242V473H254M254 473V469H261V461M253 448H259V455H261M261 461V457V455M221 446V448H227V455M252 423V440H253V448M259 494V483H254V473M224 481V479H225V477M284 485V478H261V461M281 449H267V455H261M41 572V559H27V546M64 549H42V540H32M32 540V542H27V546M6 547H13M6 537H13V547M6 559H15V549M27 546H19V549H15M13 547H14V549H15M102 478H91V469H70M97 448H83H76M76 448V454H70V469M37 352V359H43V376M37 352H19V354H11M11 354V362H7V376M7 376H20V381H38M43 376V378H40V380M40 380H39V381H38M42 339V345H37V352M61 374H53V376H43M6 348H11V354M629 625L631 631L635 637L636 644M629 625L624 622H618L613 620M610 623L613 633L609 642L611 652M610 623L613 620M611 652L619 650L626 647H635M635 647L636 644M662 640L653 642L645 644H636M635 620L634 623L631 624L629 625M608 603L611 608L612 614L613 620M590 633L597 630L603 625L610 623M608 655L611 652M638 663L635 658L634 653L635 647M763 723L768 721L774 720H779M756 699L764 700L773 701L782 700M782 700L780 706L781 713L779 720M788 745L784 751M788 745L789 739L788 732L786 726M786 726L784 724L782 721L779 720M769 648H774L780 650L785 649M786 650L787 654L788 659L790 664M765 676L769 678L774 676L778 679M790 664L785 668L784 675L778 679M782 700L786 695M778 679L781 684L783 690L786 695M786 726L792 722H800L806 718M786 695H791H796L801 696M801 696L802 703L806 708M788 745L795 742L803 745L806 744M806 773L799 771L793 773M790 770L793 773M764 627L771 623H779L786 618M785 649L790 642L792 633L795 624M795 624L791 623L790 619L786 618M764 597L770 599H776H782M786 618L784 612L782 606V599M597 454H602L607 453L613 454M593 480H603L611 477L620 475M613 454L614 462L616 469L620 475M622 499L623 491L621 484L622 476M639 472L638 471M638 471L633 474L627 473L622 476M622 476L620 475M183 470V468H189V462M183 470H176V469H162M162 469V460H155V452M190 453H172V439H163M190 453V459H189V462M155 452V444H163V439M190 493V479H183V470M223 471H208V462H189M160 472V471H162V469M132 450H145V452H155M163 425V429V439M193 448V451H190V453M261 645V651H258M597 351L592 357L589 364L586 372M597 351L595 349L592 346L591 342M568 370V364L567 358L564 353M564 353L574 351L582 345L591 342M326 341V339H320V334M371 318V317H369V315M369 315H365V306H356M356 306H349V309H347M347 309H336V334H320M286 352H309V334H320M719 321L722 315V309L723 303M697 292L704 295L711 294L719 295M697 292L694 293V297L690 298M690 298L694 304L695 312L696 319M723 303V299L722 297L719 295M747 322L746 315L744 308L742 301M723 303L729 300L736 304L742 301M765 298L759 297L753 296H747M747 296L742 301M765 272L757 271L750 274L742 273M747 296L746 288L744 281L742 273M670 400L669 396L664 395L663 391M670 400L665 407L661 414L658 422M663 391L655 392L648 394H639M639 394L638 402L643 410V418M658 422H653L648 418H643M690 405L684 403L677 402L670 400M670 376L666 380L665 386L663 391M662 427L658 422M638 370L640 378V385L639 393M638 370L631 367L623 365L615 364M615 364V369L611 371L609 375M609 375L612 382L618 388L621 395M621 395L626 393L632 394L639 393M641 368L638 370M612 356L611 359L613 362L615 364M612 356L613 353L617 352L618 348M618 348L626 346L633 342L642 340M612 356L607 355L602 354L597 351M596 379L600 377L605 375H609M594 399H601L606 403L613 402M613 402L616 401L618 397L621 395M636 424L635 432L637 439L639 447M636 424L629 422L622 423L615 425M615 425V433L616 441L618 449M618 449L624 451H630H636M639 447L636 451M665 448L657 446L648 448L639 447M643 418L641 421L639 423L636 424M613 402L612 410L613 418L615 425M594 429L601 428L608 426L615 425M613 454L618 449M638 471L635 465L639 457L636 451M739 799H744L749 801H754M754 801L756 806M762 779L765 783L766 787L764 792M754 801L756 797L761 795L764 792M135 83V75H132V65M135 83H117V93H111M109 90V92H111V93M109 90V81H115V61M115 61H127V65H132M137 85H136V83H135M138 60H134V65H132M110 103V99H111V93M91 81H103V90H109M90 62V63H89M114 60V61H115M218 91H227H235L244 93M244 93L247 88M247 88L244 82L243 76L242 70M217 89L218 83L219 76L220 69M242 70L235 69L228 68L220 69M460 325V311H469V307M424 321V309H427V300M468 303V305H469V307M468 303H448V294H430M430 294V297H427V300M394 319V310H399V295M427 300H415V295H399M369 315V301H391V276M399 295V285H391V276M430 288H420V266H394M430 288V291V294M391 276V273V270M391 270V269H394V266M356 306V295H355V279M347 309H330V292H324M324 292V282H329V273M329 273H336V279H355M391 270H376V271H364M355 279H360V271H364M82 19H77V18H66M82 19V28H86V39M66 18V27H63V42M86 39H74V42H63M63 15H64V18H66M87 40V39H86M799 40L796 43M806 63H804M796 43L800 49L803 56L804 63M732 6V7V12L733 18M755 20L750 25M750 25H743L739 19L733 18M761 169L758 168L756 165L754 163M759 133L755 134L752 136L751 140M754 163L753 155V147L751 140M752 39L751 35L752 30L750 25M752 39L747 43L742 46L735 47M733 18L730 20M730 20L729 27L725 34L724 41M735 47L731 45L728 42L724 41M670 324L669 321H665L664 318M664 318L658 320L653 323L647 322M642 340L643 336L640 332L641 328M641 328L644 327L646 324L647 322M642 36L643 28L638 21L639 13M642 36L648 37L653 38L658 41M661 37L658 41M661 37L664 32L665 27L666 21M666 21L662 15M662 15L654 14L647 11L640 12M660 59L667 60L673 61L680 60M660 59V53L661 47L658 41M686 41L682 47L681 53L680 60M686 41L678 40L670 39L661 37M66 521H59H42M32 540V533H34V529M42 521H37V529H34M6 515H8V509M34 529H26V509H8M6 507H8M8 509V508V507M99 419H83V424H73M76 448V446H72V443M73 424V429H72V443M42 521V510H37V494M14 499V502H8V507M14 499H20V493H34M37 494H36V493H34M71 502V498H62V491M37 494H43V491H62M70 469H68V473H65M62 491V486H65V473M34 493V484H33V472M65 473H51V462H42M33 472V466H42V462M806 680L803 686V694M803 694H806M806 646H805L796 649L786 650M790 664L797 665L801 671L806 672M801 696L803 694M806 624L805 623M805 623L806 620M795 624L798 622L801 624L805 623M782 599L786 597L787 592L791 590M791 590L797 596L804 601L806 602M618 348V340L612 333V324M591 342L590 336L591 331L594 325M594 325L600 324L606 326L612 324M643 298L635 299L628 302H620M643 298L646 306L644 314L647 322M641 328L635 324H627L620 319M620 302V308L621 313L620 319M612 324L614 322L616 319H620M319 333V313H308V306M319 333H299V323H277M308 306H300V299H294M294 299V306H275V321M277 323V322H275V321M320 334V333H319M324 292H314V306H308M281 350V331H277V323M259 318H265V321H275M255 308H267V283H287M287 283V290H294V299M789 797L782 800M789 797L794 800L800 801L805 805M782 800L779 806M793 773V781L791 789L789 797M764 792L769 797L775 799L782 800M806 803L805 805M162 13V6M162 13H175V15H179M179 15V7H186V6M152 25V22H162V13M130 15V9H133V6M174 37V27H181V17M181 17V15H179M244 114V126H247V137M244 114H223V113H212M212 113V125H215V136M244 140H228V138H217M244 140H245V137H247M215 136H216V138H217M247 109H265H275M247 109V110H244V114M271 138H268V140M271 138V121H280V115M268 140H254V137H247M280 115V112H275V109M211 112H212V113M244 93V100H247V109M189 145H201V136H215M217 166V156V138M217 166H233V162H241M241 162V147H244V140M214 169V168H217V166M247 88L255 85L263 84H271M275 109V94V88M275 88L271 84M178 42H193V39H200M181 17H191V23H195M200 39V31H195V23M205 6L206 7L207 12M195 23L198 18L202 15L207 12M201 61H207L212 63L217 67M201 61L199 54L201 48L202 41M217 67L222 58L227 50L230 41M202 41L208 39L214 36H220M230 41L227 38L224 36H220M199 63H200V61H201M220 69L217 67M200 39L202 41M207 12L212 13L215 17L220 19M220 19L219 24L220 30V36M248 17L242 16L238 10H231M231 10L227 13L225 17L220 19M247 41L246 33L249 26L248 17M247 41L241 43L235 40L230 41M324 139V147H325V163M324 139V137H322M322 137H317H309M309 137H305V148H297M325 163H306V167H297M297 148V156V167M350 143V154H353V161M350 143H332V139H324M353 161V164H348V168M348 168H344V170H331M331 170V166H325V163M296 114V113H298V112M296 114V130H309V137M298 112H306V106H323M330 112H325V106H323M330 112V119H322V137M271 138H281V148H297M280 115H286V114H296M331 170V181H324V187M324 187H311V188H300M296 170V180H300V188M296 170V169H297V167M357 135V126H352V112M357 135V140H350V143M330 112H341V108H349M352 112V110H349V108M298 112V98H299V85M275 88L283 86L291 87L299 84M355 192H346V195H331M355 192H356V194H357M357 194V207H348V216M331 195V201H327V216M348 216H334H327M348 168V183H355V192M324 187V190H331V195M356 238H368V240H380M356 238V233H357V228M357 228H363V210H378M380 240V232V212M380 212H379V210H378M398 255V258H394V266M398 255H392V240H380M353 242V254H364V271M353 242V240H356V238M373 196V203H378V210M373 196H368V194H357M348 216V224H357V228M398 255H404V248H407M407 248V231H408V218M408 218H391V212H380M273 221H281V222H295M266 213V202H270V196M298 192H283V196H270M298 192V198H302V212M295 222V216H302V212M300 188V190H298V192M302 212H314V216H326M353 242H337V245H327M326 216V234H327V245M267 192V179H270V168M267 192H260V187H243M243 187V180H246V169M246 169H263V167H269M296 170H281V168H270M270 196V195H267V192M236 193H240V187H243M241 162V166H246V169M268 140V157H269V167M89 6V12M105 16V9H109V6M105 16H94V12H89M82 19V15H89V12M108 18V16H105M779 19L777 26L776 34L775 41M752 39L758 43M758 43L763 41L769 42L775 41M796 43L790 46L784 45L778 44M775 41L778 44M804 63L803 64M778 44L780 52L778 59L780 67M803 64H795L788 67H780M806 89V88H802M803 64V72V80L802 88M787 111L789 104L788 98V91M802 88L797 89H793L788 91M734 190L735 194L732 196L730 199M734 190L733 183L730 177L727 170M698 186L701 192L707 195L710 200M698 186L700 182L701 177L704 173M730 199L724 200L717 201L710 200M727 170L719 172L712 174L704 173M759 188L751 189L743 190H734M754 163L745 164L736 166L727 169M751 140H742H734L726 142M727 169L726 160L725 151L726 142M476 286H494V295H512M476 286V296H468V303M469 307H494V325H504M512 295V303H504V325M506 337V335H507V334M507 334V331H504V325M667 275H660L653 274L646 276M667 275L670 283L675 289L677 297M677 297L675 299L673 302L669 303M669 303L662 299L654 295L646 292M646 292L647 287L645 281L646 276M690 298L686 297L681 298L677 297M664 318L667 314L669 309V303M643 298L646 292M413 17L419 15L425 18H431M413 17L414 11L413 6M437 6V15M437 15L431 18M413 17L409 20M414 39L413 32L408 27L409 20M414 39H419L423 42H428M431 18L432 26L428 34V42M615 48L619 47V42H623M615 48L609 45L603 42L597 39M623 42L621 36L618 29V22M597 39L595 33L596 28V22M596 22L602 23H609L616 21M616 21L618 22M631 43L623 42M631 43L635 41L639 39L642 36M639 13L633 18L626 20L618 22M598 6L596 12L593 20M593 20L596 22M616 6V13V21M640 6L641 8L640 12M689 38L695 41L701 43H708M689 38L688 32L686 26V19M708 43V34L710 25L708 16M686 19L689 15M689 15H695H700L706 14M708 16L706 14M687 66L685 63L684 60H680M687 66L694 64L700 59H708M708 59V54L711 49L709 44M686 41L689 38M666 21L673 19L679 18L686 19M730 20H722L715 19L708 16M724 41L719 44L714 42L709 44M708 6L707 8L706 14M686 6L688 9L689 15M658 62L659 70L661 78L664 86M658 62H653L648 63L643 65M647 94L643 91L642 86L638 82M647 94L653 93L658 89L664 86M638 82L641 77V71L643 65M631 43L634 49L636 56L640 63M660 59L658 62M640 63L643 65M407 248H414V250H429M408 218V217H410V216M410 216H417V215H429M429 250V236H444V222M429 215H438V222H444M77 394V398H72V401M40 380V386H45V396M45 396H56V401H72M73 424V422H68V418M72 401V411H68V418M43 415V416H45V418M43 415H30V413H11M45 418V427H41V443M14 442H33V445H40M14 442V432H6M41 443V444H40V445M6 419H8V414M8 414H9V413H11M45 396V408H43V415M68 418H52H45M38 381V391H11V413M72 443H51H41M42 462V452H40V445M6 410H8V414M6 454H8M8 454V459H6M14 442V449H8V454M14 499V489H6M33 472H19V465H6M806 577L801 578L793 581M793 581L789 575M789 575L793 566L795 557L797 547M797 547L800 548L804 550L806 549M791 590V587L793 584V581M766 567L773 571L780 574L789 575M794 544L797 547M756 225L750 223H744L738 220M730 199L733 203L732 209L734 214M738 220L734 214M248 17L247 8V6M231 10L230 6M323 106V101H320V88M299 85H305L310 83L315 84M320 88L315 84M326 270V262H323V250M326 270H299V282H287M323 250H317V246H300M300 246H290V257H285M285 257V261H280V272M280 272V278H287V282M329 273V272H326V270M327 245V247H323V250M295 222V237H300V246M268 240V245H285V257M252 273H264V272H280M359 42L358 34L360 27L359 19M359 42L353 40H346L339 38M359 19L352 18L345 20L337 21M339 38L338 32L337 27V21M360 18L368 17H376H384M360 18V11L358 6M384 17L383 12L385 7V6M363 47L371 46L378 42L385 37M363 47L359 42M385 37L383 31L385 25V19M385 19L384 17M335 6V12L334 19M334 19L337 21M409 20L401 21L393 19H385M748 68L751 66L755 65L757 62M748 68L751 73L753 79L752 85M757 62L762 66L769 69L776 72M752 85H757L759 90H762M762 90L766 86L771 85L775 82M775 82L776 79L777 75L776 72M735 65L733 59L737 53L735 47M735 65L739 67L743 69L748 68M758 43L756 49L758 55L757 62M780 67L776 72M761 111L763 104L762 97V90M788 91L785 87L780 84L775 82M704 173L700 169L699 163L695 160M726 142L723 139M695 160L700 153L702 145L707 139M723 139L718 140L712 141L707 139M758 115L748 112L739 107H728M723 139L724 129L725 118L727 108M733 91L729 96M733 91L734 83L730 75L732 67M729 96L722 93L717 86L711 82M711 82L710 77L713 72L714 67M732 67L726 66L720 67H714M728 107L726 103L727 100L729 96M752 85L746 87H739L733 91M735 65L732 67M708 59L709 62L711 65L714 67M675 91L679 87L682 83L686 80M675 91V95L679 99L678 103M678 103L685 105L692 108H699M686 80H692L697 84L702 86M702 86L701 93L702 100L700 108M687 66L685 70L688 75L686 80M664 86L667 90L671 89L675 91M711 82L708 83H704L702 86M727 108L718 106L709 108H700M698 131L702 133L704 137L707 139M698 131L699 124L697 116L699 108M662 15V9L664 6M404 46L399 45L393 43L388 40M404 46L406 50V55L405 59M405 59L398 62L391 64L384 65M388 40L386 49L387 57L384 65M414 39L410 41L408 44L404 46M385 37L388 40M410 64L411 71L410 78L408 86M410 64L405 59M404 90L408 86M404 90L399 87L393 88L389 85M383 66L386 72L385 79L389 85M353 161H359V164H372M373 196V195H374V194M372 164V167H378V172M374 194V179H378V172M357 135H364V136H381M352 112H370V111H377M377 111H380V119H386M386 119V128H381V136M372 164V149H384V141M381 136V139H384V141M436 279V266H434V254M436 279H453V275H472M434 254H446H466M472 275V259H466V254M430 288V284H436V279M429 250H432V254H434M476 286V281H474V278M474 278V276H472V275M444 222H449V219H457M466 254V251H469V246M469 246V227H457V219M410 64L416 63L422 62L429 60M429 42L428 48L427 54L429 60M408 86L414 87L420 85L426 84M426 84L427 77L433 73L435 66M429 60H432V65L435 66M426 84H430V89L434 90M434 90L440 91L447 88L454 90M435 66L439 67H444L448 66M454 90L450 83L452 74L448 66M429 42L437 41L445 40L454 39M454 39L452 46L455 53L454 61M454 61L453 64L449 63L448 66M647 94L645 98L644 102L643 106M638 82L631 80L625 84L618 83M643 106L635 108L628 107L620 111M620 111L618 102L620 93L617 84M640 63L633 65L625 67L617 68M618 83L620 78L617 73V68M615 48V52V57L612 61M612 61L613 64L615 66L617 68M486 241H480V246H469M486 241V230H495V219M461 213V215H457V219M461 213H480V212H490M495 219V216H490V212M537 214H524V223H514M537 214L539 210L536 206L537 202M514 223V198H513V189M537 202H525V189H513M495 219H506V223H514M490 212V205H497V192M497 192H506V188H512M512 188H513V189M514 163H497V160H489M514 163H516V168H518M497 192H494V186H487M518 168V182H512V188M487 186V172H489V160M410 216V203V192M374 194H392V187H406M410 192V191H406V187M378 172H389V165H406M406 187V180V165M620 132V126V120L618 114M620 132L611 135L601 138L592 142M618 114L610 113L602 114L594 111M592 142L588 137M588 137L589 129V121L592 114M594 111L592 114M569 116L570 122L571 128L570 134M569 116L576 114L584 115L592 114M570 134L576 136L582 137H588M698 186H691L686 191L680 192M695 160L689 158H683L676 159M676 159L674 161L671 163V167M680 192L677 183L672 176L671 167M627 141L633 140H639L645 141M627 141L624 146L623 152L622 157M645 141L646 150L652 159V169M622 157L624 159L625 163L626 165M626 165L633 169L640 171L647 174M647 174L652 169M627 141L624 139L622 136L620 132M622 157L612 159L603 161L594 165M592 142L593 149L589 155L591 162M591 162L594 165M594 325L590 322M620 302L616 301L615 297L614 294M614 294H606L598 293L590 294M590 322V313V304L589 296M590 294L589 296M590 322L582 320L575 324H566M589 296L582 297L574 296H566M566 324V315L564 306L566 296M512 295H520V304H540M507 334H528V318H541M541 318L543 313L542 309L540 304M248 17L254 16L260 15L265 10M265 10V6M362 53L365 56L369 58L370 63M362 53L355 57L348 60L341 64M370 63L365 70L363 79L359 87M341 64V70L343 76L345 82M345 82L348 84L350 87L353 89M353 89L359 87M363 47L362 53M383 66L379 65L374 63H370M376 91L370 90L365 86L359 87M376 91L380 87L385 88L389 85M349 108V96H353V89M320 88L328 84L337 85L345 82M377 111V102H376V91M321 65L326 64L331 62L336 61M321 65L318 62L314 60L310 57M310 57L312 51L311 45L314 40M314 40H321L327 44L333 45M336 61L337 55L332 51L333 45M315 84L319 78L318 71L321 65M341 64L336 61M294 62L295 69L298 76L299 84M294 62L299 61L304 58L310 57M294 62L292 60M292 60V54L289 49V42M289 42L290 39L293 37L294 34M294 34H301L306 39L313 38M313 38L314 40M334 19H329L325 18L320 21M339 38L338 41L334 42L333 45M313 38L314 32L316 26L320 21M682 133L679 137L676 141L673 144M682 133L679 126L675 120L672 114M673 144L665 143L659 139L651 137M651 137V130L652 124L654 118M672 114H665L660 116L654 118M676 159V154V149L673 144M698 131L692 130L687 133H682M678 103L674 106V110L672 114M645 141L651 137M671 167H665L659 169H652M643 106L647 110L650 114L654 118M620 111L618 114M404 90V94H405V104M434 90V105H428V114M405 104H415V114H428M386 119H393V113H398M405 104V110H398V113M455 116V102H454V90M455 116H447V115H429M429 115V114H428M454 90L461 88L469 87L476 84M476 84L478 79L477 74L478 69M454 61L461 63H469L476 66M476 66L478 69M593 20H588L582 21L576 19M597 39L593 41L589 44L587 49M587 49L582 45L576 47L571 44M571 44L574 36V28L576 19M568 6L567 8L570 14M576 19L570 14M626 165L623 172V180L618 187M594 165L595 172V180L597 187M618 187L611 185L604 188L597 187M514 163V150H511V139M492 137H505V139H511M492 137V140H484V147M484 147V156H488V160M429 215V203H434V194M461 213V201H459V194M434 194H449H459M410 192H420V189H429M434 194H432V189H429M487 186H478H462M459 194V191H462V186M488 160H479V173H458M462 186V181H458V173M465 142V158H455V169M465 142H475V147H484M455 169V171H458V173M403 150V143H412V137M403 150V160H407V164M407 164H426H435M424 133H420V137H412M424 133H430V144H436M436 144V158H435V164M384 141H395V150H403M398 113V127H412V137M406 165V164H407M429 189V176H435V164M429 115V126H424V133M455 116V118H460V121M460 121V128H459V131M459 131H447V144H436M459 131V136H465V142M455 169H444V164H435M563 112L557 113H551L545 116M563 112L565 105L566 99L568 92M539 93L542 90L545 87L548 85M539 93L540 98L538 104V109M568 92L562 88L555 87L548 85M538 109L541 111L544 112L545 116M563 112L569 116M570 134L567 135L566 140L562 141M545 116V122L543 127L545 132M562 141L557 137L551 135L545 132M591 162L582 160L574 162H565M562 141L561 148L563 155L565 162M538 109H531V114H515M516 133V121H515V114M516 133H523V139H538M538 139L542 138L541 133L545 132M722 243H715M722 243L727 248L734 250L738 256M715 243L716 253L717 262L718 271M738 256L737 261L740 266L739 271M739 271L734 272L730 273L726 276M726 276H722L721 272L718 271M758 241L753 247L744 250L738 256M738 220L732 227L729 236L722 243M742 273L739 271M719 295L723 289V282L726 276M697 292L696 285L699 278L697 271M697 271L704 270H711L718 271M667 275L673 269M697 271L694 268L695 264L691 262M673 269H680L685 264L691 262M680 192L678 196M678 196L670 197H663L656 198M647 174L645 178L648 183L645 188M645 188L648 192L651 196L656 198M618 187L622 189L625 191L629 194M645 188H639L635 192L629 194M547 192L541 184L537 174L530 165M547 192L551 191H556L561 190M561 190V181L563 173V164M563 164H554L545 161H535M530 165L535 161M537 202L540 199L545 197L547 192M518 168H524V165H530M538 139L535 146L536 154L535 161M565 162L563 164M511 139V135H516V133M542 318L549 320L555 324L563 326M542 318L540 329L542 340L540 351M563 326L562 335L561 343L562 351M540 351L547 349L555 351H562M566 324L563 326M540 304L545 299M545 299H551L557 296L563 295M566 296L563 295M537 352L540 351M564 353L562 351M272 69L276 64M272 69L263 68L256 64L247 61M276 64L273 57L271 49L266 42M247 61L248 55V48L247 42M247 42L253 41L259 43L266 42M271 84L273 79L270 74L272 69M292 60L287 61H281L276 64M242 70L245 67L247 65V61M289 42L282 43L274 41H266M266 41L270 34L273 26L277 18M277 18L274 14L269 13L265 10M290 20L297 19L305 17L311 14M290 20L287 18M287 18L290 10L289 6M312 6L310 9L311 14M294 34L292 30V25L290 20M320 21L316 20V15L311 14M277 18L281 17L284 20L287 18M484 113H485V115H487M484 113V103V92M487 115H494V112H512M484 92L489 88L496 91L502 87M512 112V99H510V93M510 93L508 90H504L502 87M460 121H473V113H484M492 137V124H487V115M476 84L479 87L482 89L484 92M515 114H513V112H512M503 64L495 68H487L478 69M503 64L504 72L503 79L502 87M539 93L535 90L529 88L524 85M524 85L519 86L514 89L510 93M524 85L525 78L524 71L522 64M522 64H517H511L505 62M505 62L503 64M457 6L458 7L457 14M479 6V7L477 12M477 12L471 14H464H457M437 15L442 17L447 19H452M455 38L453 32V25L452 19M452 19L457 14M502 25L495 22L488 20L480 17M502 25L501 31L499 36V42M499 42L492 41H486L479 43M480 17L478 24L476 31L474 39M479 43L474 39M506 6L508 9L510 17M510 17L506 19L505 23L502 25M477 12L480 17M500 43L502 49V56L505 62M476 66L475 58L479 51V43M455 38L461 37L468 39H474M571 44L570 52L569 60L571 68M571 44L564 43L557 45H549M571 68L563 67L556 68L549 66M549 66L545 60M549 45L550 51L545 55V60M522 64L525 63M548 85L546 79L550 73L549 66M525 63L531 61L538 62L545 60M500 43L507 42H515L523 40M525 63V55L523 48V40M545 299V289L543 279L541 269M563 295V287V278L562 270M541 269H548L555 271L562 270M646 276L642 272M614 294L617 288L619 282L623 276M642 272L636 273L630 272L625 275M623 276L625 275M602 211V204L598 197L596 189M602 211L597 216L591 219L586 224M596 189L587 191L578 193L570 197M586 224L581 220L575 218L568 217M570 197L567 203L568 210V217M597 187L596 189M561 190L562 193L566 195L570 197M575 88L572 82L573 75L571 69M575 88L579 90H583L587 91M594 84L592 78L593 71L594 65M594 84L591 86V90L587 91M571 69L577 65L585 66L591 62M591 62L594 65M568 92L575 88M594 111V104L591 97L587 91M617 84L609 83H602L594 84M612 61L606 62L600 63L594 65M587 49V53L590 57L591 62M642 272L641 266L644 260V253M673 269L670 262L668 255L663 248M663 248L657 250L650 252L644 253M683 213L680 219L676 225L670 230M683 213H689L694 217L700 218M670 230L672 236M672 236L678 242L687 243L694 249M700 218L703 223M703 223L705 229L704 235L705 241M705 241L702 244L699 248L694 249M710 200L705 205V213L700 218M678 196L680 201V207L683 213M691 262L693 258L695 254L694 249M663 248L666 245L668 239L672 236M734 214L724 219L713 220L703 223M715 243L712 242L708 243L705 241M547 23L548 28L546 32L545 36M547 23L544 21L543 19L541 16M545 36L539 37L533 35L527 36M541 16L535 15L529 12L522 13M527 36L523 30L518 24L515 17M522 13H519L517 15L515 17M570 14L562 16L555 21L547 23M549 45L550 41L547 39L545 36M544 6L543 9L541 16M523 40L527 36M526 6L522 13M510 17H515M544 241L549 240H554H559M544 241L542 232L539 224L538 215M559 240L560 232L563 225L567 218M538 215L548 214L557 215L567 218M568 217L567 218M540 268V260L542 251V242M540 268H533V271H520M542 242H524V241H516M520 271V261H509V257M516 241V248H509V253M509 253V254V257M512 295V286H520V271M514 223V232H516V241M544 241L542 242M474 278H499V257H509M486 241H503V253H509M566 266L568 261L570 256L569 250M566 266L575 268L581 272L589 276M569 250L576 247L582 244L590 243M589 276L591 274L593 272L594 269M594 269L598 263L595 255L598 248M590 243L593 244L596 245L598 248M562 270L566 266M559 240L563 242L566 246L569 250M590 294L589 288L591 282L589 276M586 224L588 230L589 237L590 243M623 276L613 275L604 273L594 269M610 246L616 255L619 265L625 275M610 246L607 248L603 249L598 248M638 243L642 236L644 228L650 221M638 243L631 240L624 243L618 239M618 239L617 233L619 226L616 219M650 220L642 219L634 217L626 212M616 219L620 216L623 215L626 212M644 253L641 250L639 247L638 243M670 230L664 226L657 224L650 221M610 246L612 243L616 242L618 239M602 211L606 215L611 216L616 219M656 198L654 206L651 213L650 220M629 194L628 200L629 206L626 212" fill="none" stroke="#5f6363" stroke-width="0.96"/>
<path d="M367.9 260.2 L375.3 258.5 L382.7 263.4 L390.1 266.8 L396.3 276.2 L390.1 273.3 L380.2 268.3 L371.6 263.4 Z" fill="#2c4c72"/>
<path d="M439.6 375.6 L443.3 366.9 L450.7 363.3 L449.5 369.4 L444.5 375.6 L442.1 378.0 Z" fill="#2c4c72"/>
<path d="M424.3 413.7 L426.6 416.2 L428.5 421.1 L427.5 427.3 L431.5 431.0 L430.5 434.7 L428.0 429.8 L425.1 424.8 Z" fill="#2c4c72"/>
<path d="M605.6 308.4 L609.3 312.8 L615.5 310.3 L620.9 303.0 L627.0 294.8 L622.9 291.6 L621.6 286.2 L617.9 290.4 L614.2 286.2 L613.0 296.1 L610.5 303.4 Z" fill="#2c4c72"/>
<path d="M526.6 502.4 L530.2 504.3 L531.5 513.0 L530.2 522.8 L533.9 526.5 L536.4 525.3 L533.9 531.4 L533.9 538.8 L531.5 537.6 L527.8 531.4 L526.6 524.0 L525.3 515.4 L527.8 509.3 Z" fill="#2c4c72"/>
<path d="M541.3 602.9 L543.8 607.8 L550.0 611.5 L554.9 607.8 L556.1 602.9 L557.8 610.2 L563.5 610.7 L563.5 613.2 L556.1 615.2 L550.0 616.4 L547.5 619.6 L541.3 617.6 L541.3 610.2 Z" fill="#2c4c72"/>
<path d="M300.0 57.9 L306.2 55.4 L311.1 57.9 L314.8 61.6 L316.0 70.2 L323.4 71.4 L320.9 76.4 L319.7 81.3 L324.6 91.1 L323.4 96.1 L319.7 89.9 L316.0 83.7 L314.8 76.4 L311.1 69.0 L309.9 61.6 L303.7 61.6 L300.0 60.3 L295.1 61.6 L293.8 57.9 Z" fill="#2c4c72"/>
<path d="M136.6 660.3 L135.1 665.0 L131.5 667.8 L126.9 667.8 L123.2 665.0 L121.8 660.3 L123.2 655.7 L126.9 652.8 L131.5 652.8 L135.1 655.7 Z" fill="#2c4c72"/>
<path d="M42.2 680.2 L47.5 681.1 L51.8 687.2 L51.0 689.8 L45.7 688.1 L43.1 683.7 Z" fill="#2c4c72"/>
<path d="M57.1 685.4 L59.8 685.4 L62.4 692.5 L65.9 700.4 L70.3 703.0 L77.3 705.1 L84.4 706.5 L84.7 710.9 L77.3 709.7 L70.3 707.8 L64.1 706.0 L60.6 699.5 L58.0 692.5 Z" fill="#2c4c72"/>
<path d="M140.6 709.2 L144.1 703.0 L145.9 696.0 L151.1 695.1 L154.7 703.0 L152.9 708.3 L147.6 710.1 L144.1 713.9 Z" fill="#2c4c72"/>
<path d="M784.3 731.1 L788.7 740.0 L794.7 747.4 L796.1 754.7 L790.2 751.8 L785.8 744.4 Z" fill="#2c4c72"/>
<path d="M791 650 L786 656 L786.5 666 L784.5 674 L787.5 682 L791.4 688 L790.4 700 L794 712 L789 722 L785 732 L786 740" fill="none" stroke="#0a4470" stroke-width="2.5"/>
<path d="M181.6 6.2 L191.4 17.2 L197.6 32.0 L200.0 44.3 L200.0 71.4 L198.8 91.1 L191.4 103.4 L186.5 115.8 L185.3 133.0 L176.7 147.8 L173.0 160.1 L164.3 172.4 L156.9 187.2 L149.6 200.0 M240.7 6.2 L230.8 17.2 L228.4 27.1 L227.1 44.3 L224.7 59.1 L217.3 66.5 L201.3 71.4 M240.7 6.2 L248.1 17.2 L254.2 24.6 L261.6 34.5 L264.1 44.3 L265.3 53.0 L272.7 59.1 L290.0 61.1 L302.3 54.2 L314.6 53.0 L320.0 55.4 M221.0 200.0 L225.9 189.7 L243.2 183.5 L267.8 172.4 L292.4 165.0 L307.2 162.6 L320.0 160.1 M181.0 6.2 L189.7 14.8 L194.6 27.1 L199.5 40.6 M5.5 257.0 L25.2 256.5 L40.0 255.3 L64.6 250.3 L89.3 241.7 L111.4 234.3 L136.1 226.9 L153.3 223.3 L160.7 225.7 M160.7 223.3 L173.0 221.5 L175.5 226.9 L173.0 231.4 L161.9 231.4 L160.7 225.7 M153.3 190.0 L147.1 199.9 L145.9 207.2 L149.6 217.1 L153.3 223.3 M174.2 223.3 L192.7 214.6 L212.4 202.3 L223.5 190.0 M164.4 231.4 L166.8 246.7 L169.3 263.9 L173.0 283.6 L171.8 305.8 L174.2 323.0 L177.9 342.7 L181.6 362.4 L183.3 390.0 M6.8 460.8 L27.1 462.7 L54.2 465.4 L78.6 472.1 L94.9 476.2 L113.8 473.5 L135.5 473.5 L147.7 478.9 L162.6 480.8 L184.3 478.1 L200.0 474.9 M184.3 380.0 L177.5 399.0 L168.0 417.9 L161.2 434.2 L159.9 455.9 L153.1 472.1 L149.1 480.3 L143.6 493.8 L136.9 507.4 L132.8 526.3 L130.1 556.2 L128.7 580.5 L127.4 600.1 M147.7 473.5 L154.5 466.7 L154.5 477.6 M806.1 71.4 L782.4 81.3 L762.7 88.7 L743.0 96.1 L725.8 105.9 L708.5 115.8 L691.3 124.4 L674.0 133.0 L659.3 142.9 L646.9 147.8 L634.6 149.0 L619.9 147.8 L610.0 153.9 M610.0 140.4 L613.7 147.8 L619.9 147.8 M659.3 142.9 L669.1 152.7 L674.0 165.0 L683.9 172.4 L686.4 184.7 L698.7 189.7 L715.9 189.2 L738.1 183.5 L762.7 179.8 L782.4 174.9 L802.1 172.4 M715.9 189.2 L719.6 200.0 M610.0 323.0 L629.7 315.6 L649.4 305.8 L666.7 292.2 L683.9 283.6 L708.5 273.7 L720.8 263.9 L728.2 256.5 L740.5 251.6 L757.8 241.7 L782.4 229.4 L806.1 222.0 M718.4 190.0 L725.8 204.8 L735.6 214.6 L745.5 215.9 L752.9 226.9 L759.0 239.3 L763.9 254.0 L767.6 268.8 L770.1 281.1 L787.3 293.4 L806.1 308.2 M739.3 254.0 L747.9 268.8 L770.1 281.1 M610.0 357.5 L634.6 363.6 L659.3 368.6 L683.9 369.8 L708.5 372.3 L733.2 372.3 L752.9 373.5 L767.6 364.9 L787.3 355.0 L806.1 342.7 M627.2 423.1 L644.5 436.7 L669.1 453.9 L708.5 466.2 L733.2 469.9 L757.8 472.4 L782.4 482.2 L802.1 488.4 M610.0 403.4 L619.9 412.0 L627.2 423.1 L634.6 433.0 L630.9 444.0 L629.7 478.5 L630.9 503.2 L637.1 527.8 L646.9 547.5 L651.9 580.0 M588.6 6.2 L587.3 24.6 L594.7 36.9 L603.3 54.2 L599.7 76.4 L604.6 91.1 M300.0 53.0 L309.9 53.0 L324.6 61.6 L339.4 73.9 L354.2 85.0 L366.5 94.8 L378.8 105.9 L391.1 115.8 L401.0 123.2 L405.9 133.0 M473.6 6.2 L472.4 22.2 L465.0 41.9 L452.7 53.0 L435.5 59.1 L430.5 71.4 L425.6 83.7 L420.7 92.4 L413.3 105.9 L409.6 115.8 L405.9 125.6 L405.9 133.0 M365.3 135.5 L369.0 118.2 L381.3 105.9 L396.1 99.8 L410.8 101.0 L428.1 105.9 L435.5 115.8 L436.7 133.0 L433.0 147.8 L428.1 158.9 L410.8 163.8 L393.6 165.0 L378.8 160.1 L369.0 150.2 L365.3 135.5 M300.0 165.0 L319.7 160.1 L336.9 155.2 L354.2 149.0 L373.9 145.3 L393.6 137.9 L405.9 134.2 M405.9 134.2 L403.4 147.8 L399.8 167.5 L396.1 182.3 L397.3 200.0 M405.2 134.8 L420.0 134.3 L434.8 131.9 L456.9 134.3 L481.6 138.0 L501.3 135.6 L518.5 136.8 L528.4 146.7 L540.7 154.0 L553.0 159.0 L567.8 156.5 L582.6 160.2 L597.3 159.0 L612.1 152.8 L620.0 149.1 M405.2 134.8 L412.6 139.3 L420.0 149.1 L429.9 159.0 L439.7 173.7 L447.1 188.5 L459.4 198.4 L469.3 210.7 L476.7 223.0 L484.0 232.9 L493.9 235.3 L503.7 239.0 M503.7 239.0 L513.6 235.3 L523.4 236.6 L535.8 227.9 L548.1 215.6 L557.9 203.3 L570.2 188.5 L582.6 171.3 L592.4 160.2 L597.3 159.0 M603.5 90.0 L603.5 97.4 L592.4 109.7 L597.3 122.0 L607.2 131.9 L614.6 146.7 L620.0 147.9 M503.7 239.0 L498.8 250.1 L493.9 267.3 L486.5 282.1 L481.6 290.0 L476.7 304.3 L466.8 316.6 L454.5 330.1 M522.2 239.0 L530.8 247.6 L535.8 257.5 L538.2 272.3 L543.2 284.6 L543.2 290.0 M396.3 190.0 L398.7 214.6 L397.5 239.3 L393.8 254.0 L396.3 276.2 L396.3 298.4 L400.0 318.1 L400.0 330.4 M399.0 330.0 L402.7 344.8 L402.7 359.6 L406.4 371.9 L403.9 384.2 L406.4 399.0 L411.3 413.7 L421.1 431.0 L428.5 450.7 L434.7 464.2 L439.6 471.6 M454.4 330.0 L438.4 342.3 L423.6 354.6 L415.0 364.5 L406.4 371.9 M415.0 364.5 L428.5 363.3 L448.2 362.0 L467.9 362.0 L482.7 361.3 M406.4 371.9 L396.5 379.3 L386.7 386.7 L374.3 396.5 L364.5 400.2 M391.6 375.6 L399.0 383.0 L403.9 384.2 M439.6 471.6 L463.0 471.6 L482.7 464.2 L502.4 454.4 L514.7 445.8 L524.6 431.0 L530.0 423.6 M544.0 291.1 L553.9 305.9 L558.8 318.2 L568.7 323.2 L573.6 334.2 L581.0 342.9 L582.2 352.7 M583.4 293.6 L576.1 305.9 L573.6 315.8 L569.9 323.2 M592.1 335.5 L608.1 323.2 M594.5 347.8 L593.2 353.9 L589.6 358.4 L584.7 360.1 L579.8 358.4 L576.1 353.9 L574.8 347.8 L576.1 341.6 L579.8 337.1 L584.7 335.5 L589.6 337.1 L593.2 341.6 L594.5 347.8 M480.0 361.3 L504.6 357.6 L529.3 353.9 L553.9 351.5 L574.8 347.8 M593.3 351.5 L608.1 355.2 M583.4 357.6 L590.8 367.5 L598.2 377.3 L603.2 389.7 L608.1 400.0 M581.0 357.6 L571.1 367.5 L558.8 377.3 L551.4 392.1 L547.7 400.0 L530.0 423.6 M364.7 400.0 L347.5 403.7 L337.6 412.3 L325.3 424.6 L310.5 436.9 L300.7 449.3 L290.8 460.3 L278.5 466.5 L261.3 473.9 L229.3 473.9 L204.6 475.1 L180.0 478.8 M261.3 473.9 L253.9 481.3 L249.0 496.1 L241.6 508.4 L236.7 518.2 L235.4 528.1 L226.8 537.9 L216.9 550.2 L214.5 572.4 L213.5 579.8 M380.0 565.0 L367.2 577.3 L361.0 582.3 M439.6 471.3 L437.9 479.7 L429.3 494.5 L421.9 511.7 L412.0 526.5 L399.7 543.7 L387.4 558.5 L380.0 564.7 M380.0 635.4 L389.9 627.5 L404.6 620.1 L424.3 617.6 L444.0 615.9 L461.3 621.3 L478.5 615.2 L495.8 615.7 L515.5 615.7 L532.7 622.6 L552.4 628.7 L567.2 632.4 L580.0 638.6 M6.2 661.4 L15.8 660.5 L35.1 653.8 L52.7 647.7 L68.5 643.3 L79.1 644.1 L87.9 648.5 L91.4 657.3 L98.4 664.4 L109.0 670.5 L123.0 673.1 L133.6 674.9 L144.1 681.1 L156.4 683.7 L160.8 686.3 L167.0 680.2 L175.7 671.4 L182.8 662.6 L184.5 658.2 M87.9 645.9 L98.4 641.9 L112.5 641.2 L130.1 640.6 L147.6 640.6 L158.2 644.1 L168.7 649.4 L179.3 654.7 L186.3 655.9 L193.3 656.4 L200.0 654.7 M130.9 580.0 L128.3 594.1 L126.5 606.4 L126.5 623.9 L129.2 638.0 L133.6 646.8 L136.2 655.6 L133.6 666.1 L131.8 674.0 M6.2 616.0 L11.4 622.2 L13.7 631.0 L11.4 639.8 L13.2 650.3 L15.8 660.0 M180.0 655.6 L192.3 656.4 L206.4 652.1 L223.9 646.8 L241.5 642.4 L259.1 644.1 L273.1 643.3 L285.4 639.8 L301.3 632.7 L306.5 627.5 L311.8 623.1 L320.6 624.8 L338.2 626.6 L348.7 631.0 L359.3 632.7 L366.3 637.1 L380.0 638.0 M361.0 580.0 L352.2 587.0 L338.2 594.9 L324.1 599.3 L311.8 604.6 L307.4 611.6 L305.7 622.2 L305.7 627.5 M213.4 580.0 L209.9 594.1 L202.8 609.9 L195.8 625.7 L188.8 641.5 L185.3 655.6 L180.0 666.1 M651.3 570.0 L655.7 587.7 L661.6 605.5 L670.5 623.2 L682.3 638.0 L697.1 652.8 L708.9 664.6 L714.8 679.4 L723.7 700.1 L735.5 720.8 L744.4 738.5 L750.3 762.1 L754.7 791.7 M570.0 636.5 L587.7 639.5 L608.4 640.9 L629.1 640.9 L652.8 646.9 L676.4 654.2 L697.1 654.2 L708.9 661.6 L729.6 661.6 L753.3 658.7 L776.9 655.7 L788.7 655.7 M797.6 570.0 L788.7 587.7 L784.3 608.4 L785.8 629.1 L788.7 646.9 L790.2 664.6 L797.6 676.4 L806.5 688.2 M781.4 645.4 L778.4 655.7 L781.4 667.5 L790.2 669.0 M582.2 337.9 L581.5 347.8 L583.4 358.9 M574.8 347.8 L583.4 349.8 L593.8 351.5 M586.4 335.0 L588.4 323.2 L587.4 313.8 M592.1 335.5 L585.9 341.6 L582.2 347.8" fill="none" stroke="#84701c" stroke-width="0.96" stroke-linejoin="round"/>
<path d="M4.2 105.2 L120.0 105.2 L154.5 105.4 L156.9 112.1 L161.4 114.5 L159.4 123.2 L152.0 130.5 L144.6 140.4 L137.7 149.5 L186.5 149.5 M201.3 6.2 L205.0 11.1 L207.4 19.7 L208.7 28.3 L202.5 30.8 L201.3 35.7 L205.0 40.6 L209.9 46.8 L212.4 55.4 L217.3 60.3 L221.0 59.1 M219.8 59.1 L219.8 55.4 L225.9 53.0 L230.8 46.8 L238.2 40.6 L246.8 39.4 L253.0 43.1 L262.9 46.8 L272.7 53.0 L278.9 54.2 L282.6 49.3 L282.6 43.1 L277.6 36.9 L277.6 28.3 L282.6 23.4 L292.4 20.9 L303.5 18.5 L309.7 16.0 L308.4 11.1 L304.7 6.2 M218.5 60.3 L225.9 59.1 L230.8 62.8 L232.1 69.0 L227.1 73.9 L225.9 78.8 L230.8 80.0 L228.4 85.0 L225.9 91.1 L223.4 97.3 L219.8 98.5 L216.1 93.6 L212.4 92.4 L209.9 98.5 L207.4 104.7 L205.0 108.4 L203.7 102.2 L205.0 98.5 L201.3 97.3 L197.6 99.8 L198.8 103.4 L202.5 104.7 L201.3 109.6 L196.4 112.1 L193.9 117.0 L198.8 120.7 L200.0 124.4 L192.7 125.6 L189.0 128.1 L191.4 133.0 L195.1 135.5 L196.4 139.2 L190.2 142.9 L186.5 147.8 L187.7 152.7 L191.4 155.2 L190.2 157.6 L184.0 158.9 L185.3 162.6 L179.1 167.5 L173.0 170.0 L169.3 173.6 L170.5 177.3 L175.4 181.0 L173.0 184.7 L168.0 186.0 L171.7 189.7 L170.5 192.1 L164.3 189.7 L160.6 193.3 L159.4 197.0 L155.7 200.0 M171.8 190.0 L165.6 192.5 L163.2 197.4 L160.7 202.3 L155.8 201.1 L154.5 204.8 L160.7 207.2 L155.8 210.9 L154.5 215.9 L159.5 218.3 L160.7 223.3 L155.8 226.9 L152.1 229.4 L150.8 234.3 L144.7 235.6 L143.4 239.3 L147.1 243.0 L147.1 249.1 L141.0 251.6 L136.1 252.8 L132.4 247.9 L129.9 250.3 L132.4 255.3 L128.7 256.5 L125.0 261.4 L126.2 263.9 L132.4 265.1 L129.9 268.8 L125.0 270.0 L122.5 267.6 L123.7 275.0 L125.0 278.7 L122.5 283.6 L123.7 288.5 L120.0 292.2 L115.1 293.4 L116.4 298.4 L112.7 299.6 L110.2 297.1 L107.7 302.1 L104.0 304.5 L99.1 305.8 L96.7 308.2 L104.0 310.7 L105.3 313.2 L97.9 314.4 L95.4 318.1 L99.1 320.5 L100.3 324.2 L96.7 326.7 L90.5 326.7 L85.6 330.4 L90.5 331.6 L91.7 335.3 L88.0 339.0 L90.5 343.9 L91.7 347.6 L86.8 347.6 L83.1 346.4 L85.6 352.6 L80.6 353.8 L76.9 352.6 L74.5 356.3 L79.4 360.0 L79.4 363.6 L74.5 366.1 L76.9 371.0 L80.6 373.5 L75.7 376.0 L76.9 380.9 L83.1 382.1 L86.8 378.4 L84.3 374.7 L80.6 382.1 L80.6 390.0 M81.3 380.0 L85.4 382.7 L79.9 386.8 L82.7 390.8 L88.1 392.2 L85.4 397.6 L84.0 403.0 L78.6 405.7 L77.2 411.2 L81.3 413.9 L75.9 419.3 L78.6 423.4 L85.4 420.7 L85.4 427.4 L79.9 430.1 L79.9 438.3 L84.0 442.3 L79.9 447.8 L84.0 451.8 L90.8 450.5 L90.8 457.2 L84.0 458.6 L84.0 464.0 L89.4 466.7 L93.5 464.0 L96.2 472.1 L100.3 473.5 L98.9 476.2 L93.5 477.6 L93.5 484.3 L89.4 487.0 L84.0 485.7 L79.9 489.8 L81.3 493.8 L86.7 492.5 L90.8 495.2 L86.7 499.2 L82.7 503.3 L78.6 507.4 L74.5 515.5 L67.8 519.6 L65.0 523.6 L71.8 526.3 L70.5 529.1 L63.7 527.7 L61.0 533.1 L61.0 539.9 L55.6 541.2 L59.6 544.0 L58.3 550.7 L54.2 556.2 L48.8 557.5 L48.8 561.6 L54.2 560.2 L52.8 565.6 L47.4 569.7 L44.7 571.1 L44.7 580.5 L48.8 587.3 L44.7 594.1 L187.0 594.6 M6 415.2 L78.6 415.2 M208.7 104.7 L265.3 105.2 L300 105.2 L311 105.2 L311.8 97.3 L309.4 89.2 L324.6 91.6 L361.6 91.1 L420.7 90.6 L460 93.1 L500 94.8 L558 95.6 L610 96.5 L610.0 97.3 L634.6 96.8 L683.9 95.6 L743.0 95.6 L767.6 94.3 L787.3 94.3 L806.1 98.0 M634.6 96.1 L640.8 92.4 L654.3 87.4 L669.1 83.7 L676.5 82.5 L680.2 75.1 L691.3 71.4 L696.2 67.7 L697.4 60.3 L706.1 55.4 L708.5 48.0 L720.8 41.9 L738.1 34.5 L747.9 27.1 L755.3 19.7 L761.5 14.8 L760.2 11.1 L751.6 9.9 L747.9 6.2 M761.5 14.8 L766.4 18.5 L766.4 24.6 L770.1 30.8 L777.5 34.5 L782.4 40.6 L792.3 41.4 L802.1 36.9 L806.1 33.3 M787.3 94.3 L783.6 101.0 L783.6 108.4 L780.0 113.3 L781.9 119.5 L776.3 118.2 L767.6 123.2 L762.7 130.5 L757.8 139.2 L750.4 139.2 L744.2 135.5 L735.6 137.9 L728.2 142.9 L720.8 151.5 L715.9 152.7 L715.9 146.6 L712.2 144.1 L704.8 147.8 L698.7 153.9 L693.7 155.2 L692.5 161.3 L688.8 168.7 L681.4 167.5 L674.0 171.2 L664.2 177.3 L656.8 182.3 L649.4 188.4 L639.6 186.7 L627.2 189.7 L617.4 195.8 L612.5 200.0 L613.0 200.0 L610.5 204.9 L605.6 213.5 L595.8 214.8 L589.6 219.7 L588.4 238.9 M143.4 238.5 L299 237.5 L336 237.5 L430 238.5 L492 239 L588 239 L679 238.5 M679.0 238.5 L691.3 234.3 L703.6 230.6 L711.0 226.9 L720.8 224.0 L730.7 220.8 L740.5 220.0 L757.8 220.8 L782.4 222.0 L806.1 222.8 M679.0 238.5 L671.6 246.7 L663.0 255.3 L660.5 262.7 L664.2 267.6 L674.0 275.0 L683.9 283.6 L695.0 283.6 L697.4 291.0 L703.6 300.8 L706.1 310.7 L713.4 320.5 L718.4 330.4 L728.2 337.8 L738.1 345.2 L744.2 352.6 L747.9 360.0 L757.8 364.9 L763.9 372.3 L767.6 379.7 L765.2 380.0 L767.6 387.4 L772.6 389.9 L777.5 397.2 L782.4 404.6 L792.3 410.8 L797.2 416.9 L799.7 425.6 L803.3 433.0 L804.6 441.6 L807.0 446.5 M299.0 237.5 L302.7 243.0 L307.6 247.9 L306.4 263.9 L302.7 288.5 L299.0 325.5 L295.3 362.4 L292.8 390.0 L292.1 400.0 L287.1 436.9 L282.2 473.9 L279.8 503.4 L279.8 528.1 L281.0 560.1 L282.2 584.7 L283.0 600.0 L283.5 620 L285 641 M492.3 239.4 L498.5 269.0 L504.6 308.4 L512.0 352.7 L519.4 400.0 L520.9 399.0 L527.0 428.5 L530.0 443.3 L537.6 460.0 L540.1 467.4 L537.6 476.0 L545.0 480.9 L537.6 485.9 L533.9 492.0 L532.7 500.6 L531.5 521.6 L533.9 541.3 L532.7 558.5 L530.2 575.8 L535.2 585.6 L537.6 594.2 L541.3 602.9 L545.0 612.7 L547.5 620.1 L580.0 621.3 M537.6 594.5 L344.3 594.5 M547.5 620.1 L580.0 621.3 L570.0 620.8 L629.1 624.7 L688.2 628.5 L742.9 631.5 L744.4 640.9 L747.4 649.8 L757.7 651.3 L760.7 638.0 L759.2 626.2 L757.7 614.3 L765.1 609.9 L774.0 611.4 L785.8 615.8 L794.7 618.8 M186.3 594.9 L183.7 602.8 L179.3 611.6 L177.5 620.4 L181.0 632.7 L188.9 641.5 L192.4 650.3 L194.2 659.1 L196.8 666.1 M344.3 594.4 L341.7 605.5 L348.7 615.1 L355.7 620.4 L359.3 625.7 L357.5 632.7 L355.7 639.8 L359.3 643.3 L362.8 645.0" fill="none" stroke="#000" stroke-width="0.96" stroke-linejoin="round"/>
<path d="M15.5 720.8 L19.7 718.7 L25.3 715.9 L28.1 717.3 L31.6 720.1 L35.9 720.8 L39.4 721.5 L38.0 724.3 L34.5 726.4 L33.8 729.2 L30.2 729.9 L26.0 727.1 L21.1 724.3 L16.9 722.2 Z" fill="#5c4f4a" stroke="#000" stroke-width="0.96"/>
<path d="M473.6 655.3 L476.8 663.3 L481.6 661.7 L480.0 656.9 L486.4 660.1 L492.9 658.5 L495.3 652.0 L498.5 654.5 L494.5 660.9 L488.0 663.3 L483.2 665.7 L486.4 670.5 L492.9 675.3 L496.1 672.9 L500.1 673.7 L500.9 679.3 L507.3 678.5 L508.1 680.9 L502.5 681.7 L497.7 678.5 L492.9 676.9 L488.0 675.3 L481.6 669.7 L477.6 664.9 Z" fill="#00416a" stroke="#000" stroke-width="1"/>
<path d="M532.1 714.5 L534.5 718.5 L542.5 716.1 L552.1 711.3 L560.1 705.7 L568.9 698.5 L561.7 702.0 L552.1 707.0 L546.5 710.2 L545.7 705.7 L548.6 702.0 L542.5 702.8 L538.0 707.0 L533.7 712.1 Z" fill="#00416a" stroke="#000" stroke-width="1"/>
<path d="M508.1 694.5 L510.5 693.7 L513.4 698.0 L515.0 704.1 L514.2 708.9 L511.7 711.3 L509.2 704.1 L508.1 698.5 Z" fill="#00416a" stroke="#000" stroke-width="1"/>
<path d="M801 621h6v1h-6zM797 642h1v1h-1zM799 571h6v1h-6zM794 616h3v1h-3zM799 650h1v1h-1zM792 621h1v1h-1zM794 636h2v2h-2zM803 591h2v1h-2zM804 652h4v2h-4zM804 562h3v1h-3zM798 593h6v2h-6zM801 566h3v1h-3zM789 607h1v2h-1zM803 643h3v2h-3zM791 617h2v3h-2zM803 654h4v2h-4zM792 610h4v1h-4zM794 618h3v1h-3zM791 602h6v3h-6zM795 596h6v1h-6zM794 591h1v1h-1zM798 631h1v1h-1zM802 657h2v3h-2zM800 594h2v1h-2zM803 656h3v1h-3zM804 573h4v1h-4zM796 577h4v2h-4zM801 574h2v3h-2zM800 604h4v2h-4zM794 589h4v3h-4zM802 654h3v1h-3zM803 569h6v2h-6zM800 566h6v1h-6zM801 634h3v2h-3zM800 586h3v1h-3zM798 617h3v2h-3zM802 626h3v2h-3zM803 587h4v2h-4zM803 650h4v2h-4zM802 654h2v1h-2zM799 642h1v2h-1zM800 577h4v2h-4zM799 621h1v1h-1zM801 576h2v1h-2zM797 622h2v1h-2zM802 565h2v2h-2zM800 579h4v3h-4zM803 567h3v1h-3zM802 594h1v3h-1zM799 597h1v2h-1zM798 613h3v1h-3zM798 601h3v2h-3zM801 574h2v1h-2zM803 620h1v2h-1zM801 571h2v2h-2zM795 622h4v1h-4zM800 608h4v1h-4zM804 618h4v2h-4zM804 601h4v2h-4zM802 574h4v1h-4zM802 589h1v2h-1zM803 612h1v1h-1zM799 608h3v2h-3zM796 608h6v1h-6zM803 562h3v3h-3zM797 589h3v3h-3zM801 573h1v3h-1zM802 579h6v3h-6zM799 628h4v2h-4zM792 598h3v2h-3zM803 641h4v3h-4zM803 588h2v1h-2zM796 607h3v3h-3zM802 575h1v1h-1zM795 586h1v2h-1zM804 631h4v1h-4zM802 572h1v1h-1zM802 657h2v3h-2zM795 578h2v1h-2zM800 614h3v1h-3zM796 616h6v1h-6zM803 561h4v2h-4zM803 595h2v2h-2zM800 575h6v3h-6zM798 621h3v2h-3zM793 611h3v2h-3zM801 632h3v1h-3zM802 616h6v3h-6zM796 604h3v1h-3zM802 638h1v1h-1zM803 653h1v1h-1zM803 655h2v3h-2zM793 597h6v2h-6zM801 638h3v2h-3zM803 639h6v1h-6zM800 618h4v1h-4zM800 570h1v2h-1zM802 647h1v2h-1zM798 606h4v2h-4zM792 606h2v1h-2zM802 597h2v3h-2zM795 585h3v1h-3zM801 563h3v2h-3zM802 652h4v1h-4zM799 572h2v1h-2zM802 563h1v3h-1zM794 599h3v1h-3zM800 606h4v1h-4zM797 636h1v3h-1zM788 602h1v2h-1zM795 636h6v3h-6zM799 615h2v2h-2zM802 569h1v2h-1zM794 599h4v2h-4zM793 590h2v1h-2zM794 628h2v1h-2zM798 651h2v3h-2zM802 567h4v3h-4zM801 595h6v1h-6zM795 631h4v1h-4zM797 614h3v2h-3zM794 591h2v1h-2zM800 638h3v1h-3zM800 608h3v2h-3zM803 647h4v3h-4zM804 560h2v3h-2zM803 563h1v1h-1zM802 629h4v3h-4zM799 573h3v2h-3zM793 626h6v1h-6zM802 563h3v2h-3zM801 644h2v3h-2zM794 602h1v1h-1zM800 617h1v2h-1zM800 612h4v2h-4zM798 638h2v2h-2zM791 618h2v3h-2zM789 606h2v2h-2zM792 627h6v1h-6zM794 607h2v1h-2zM799 587h3v1h-3zM801 596h1v3h-1zM791 608h2v2h-2zM796 597h3v1h-3zM799 638h4v3h-4zM795 621h1v1h-1zM791 610h4v1h-4zM796 591h4v3h-4zM794 607h6v3h-6zM801 626h3v3h-3z" fill="#000"/>
<path d="M213 684h2v2h-2zM224 700h2v2h-2zM218 703h2v2h-2zM229 682h2v2h-2zM205 678h2v2h-2zM207 668h2v2h-2zM210 687h2v2h-2zM200 677h2v2h-2zM213 690h2v2h-2zM214 681h2v2h-2zM205 688h2v2h-2zM201 682h2v2h-2zM215 687h2v2h-2zM215 691h2v2h-2zM215 683h2v2h-2zM221 691h2v2h-2zM221 683h2v2h-2zM209 676h2v2h-2zM220 677h2v2h-2zM215 690h2v2h-2zM218 691h2v2h-2zM208 674h2v2h-2zM202 688h2v2h-2zM221 693h2v2h-2zM206 681h2v2h-2zM228 695h2v2h-2zM211 678h2v2h-2zM213 689h2v2h-2zM221 683h2v2h-2zM222 676h2v2h-2zM225 684h2v2h-2zM222 687h2v2h-2zM199 682h2v2h-2zM210 696h2v2h-2zM213 686h2v2h-2zM205 685h2v2h-2zM215 692h2v2h-2zM213 688h2v2h-2zM199 706h2v2h-2zM209 705h2v2h-2zM207 717h2v2h-2zM194 710h2v2h-2zM205 706h2v2h-2zM210 705h2v2h-2zM206 707h2v2h-2zM206 713h2v2h-2zM219 696h2v2h-2zM204 707h2v2h-2zM193 712h2v2h-2zM203 704h2v2h-2zM197 700h2v2h-2zM201 705h2v2h-2zM201 710h2v2h-2zM199 703h2v2h-2zM204 711h2v2h-2zM205 695h2v2h-2zM211 714h2v2h-2zM207 700h2v2h-2zM212 709h2v2h-2zM216 702h2v2h-2zM196 705h2v2h-2zM202 722h2v2h-2zM208 706h2v2h-2zM204 701h2v2h-2zM204 711h2v2h-2zM203 706h2v2h-2zM204 715h2v2h-2zM209 704h2v2h-2zM195 728h2v2h-2zM196 723h2v2h-2zM193 728h2v2h-2zM189 721h2v2h-2zM184 738h2v2h-2zM187 724h2v2h-2zM187 725h2v2h-2zM195 725h2v2h-2zM196 723h2v2h-2zM195 723h2v2h-2zM199 723h2v2h-2zM194 727h2v2h-2zM195 724h2v2h-2zM201 730h2v2h-2zM187 722h2v2h-2zM196 729h2v2h-2zM194 724h2v2h-2zM199 729h2v2h-2zM189 726h2v2h-2zM184 709h2v2h-2zM188 730h2v2h-2zM192 724h2v2h-2zM198 721h2v2h-2zM177 735h2v2h-2zM184 729h2v2h-2zM187 734h2v2h-2zM185 729h2v2h-2zM175 737h2v2h-2zM178 737h2v2h-2zM191 728h2v2h-2zM184 733h2v2h-2zM181 731h2v2h-2zM179 738h2v2h-2zM187 728h2v2h-2zM184 735h2v2h-2zM179 730h2v2h-2zM183 739h2v2h-2zM188 737h2v2h-2zM173 734h2v2h-2zM168 723h2v2h-2zM175 742h2v2h-2zM171 730h2v2h-2zM167 732h2v2h-2zM167 739h2v2h-2zM173 730h2v2h-2zM159 732h2v2h-2zM164 738h2v2h-2zM172 742h2v2h-2zM173 741h2v2h-2zM169 740h2v2h-2zM171 732h2v2h-2zM173 735h2v2h-2zM171 743h2v2h-2zM167 732h2v2h-2zM168 729h2v2h-2zM168 740h2v2h-2zM159 750h2v2h-2zM158 741h2v2h-2zM151 746h2v2h-2zM157 742h2v2h-2zM150 746h2v2h-2zM167 751h2v2h-2zM161 750h2v2h-2zM148 755h2v2h-2zM160 741h2v2h-2zM153 757h2v2h-2zM158 749h2v2h-2zM158 746h2v2h-2zM158 749h2v2h-2zM222 743h2v2h-2zM229 751h2v2h-2zM225 745h2v2h-2zM226 743h2v2h-2zM228 749h2v2h-2zM223 747h2v2h-2zM224 748h2v2h-2zM222 744h2v2h-2zM234 753h2v2h-2zM232 755h2v2h-2zM234 754h2v2h-2zM229 750h2v2h-2zM230 756h2v2h-2zM234 754h2v2h-2zM232 752h2v2h-2zM128 751h2v2h-2zM137 750h2v2h-2zM128 740h2v2h-2zM133 747h2v2h-2zM138 751h2v2h-2zM129 748h2v2h-2zM131 747h2v2h-2zM121 739h2v2h-2zM130 744h2v2h-2zM132 752h2v2h-2zM127 741h2v2h-2zM131 736h2v2h-2zM129 744h2v2h-2zM129 752h2v2h-2zM133 746h2v2h-2zM124 756h2v2h-2zM132 746h2v2h-2zM137 755h2v2h-2zM89 755h2v2h-2zM84 742h2v2h-2zM96 746h2v2h-2zM92 754h2v2h-2zM96 751h2v2h-2zM89 747h2v2h-2zM102 749h2v2h-2zM92 755h2v2h-2zM89 752h2v2h-2zM90 749h2v2h-2zM82 750h2v2h-2zM101 749h2v2h-2zM97 742h2v2h-2zM77 749h2v2h-2zM74 747h2v2h-2zM78 742h2v2h-2zM79 744h2v2h-2zM70 745h2v2h-2zM69 745h2v2h-2zM78 745h2v2h-2zM115 757h2v2h-2zM110 750h2v2h-2zM117 755h2v2h-2zM116 752h2v2h-2zM127 755h2v2h-2zM122 759h2v2h-2zM117 755h2v2h-2zM116 750h2v2h-2zM118 757h2v2h-2zM114 752h2v2h-2z" fill="#00416a"/><path d="M215 694h2v3h-2zM227 687h2v1h-2zM218 695h3v3h-3zM204 694h1v1h-1zM220 679h1v1h-1zM226 689h2v3h-2zM202 677h2v3h-2zM205 693h2v1h-2zM217 683h1v3h-1zM206 689h2v3h-2zM208 685h2v3h-2zM202 678h1v2h-1zM224 685h1v2h-1zM205 681h1v2h-1zM214 688h2v1h-2zM213 688h1v1h-1zM211 697h1v1h-1zM208 692h3v2h-3zM190 685h2v1h-2zM222 690h1v1h-1zM220 684h2v1h-2zM211 691h1v3h-1zM205 695h2v1h-2zM203 674h3v2h-3zM205 690h1v2h-1zM212 691h2v2h-2zM224 687h1v1h-1zM210 681h2v2h-2zM210 682h2v1h-2zM221 686h2v2h-2zM209 682h2v1h-2zM212 691h3v2h-3zM212 692h1v1h-1zM216 681h1v3h-1zM213 683h3v2h-3zM224 682h1v3h-1zM221 669h1v2h-1zM210 683h1v1h-1zM210 685h3v1h-3zM218 681h1v2h-1zM208 682h3v2h-3zM212 694h1v3h-1zM215 686h3v3h-3zM196 678h1v1h-1zM214 673h3v2h-3zM223 675h2v1h-2zM215 684h3v1h-3zM226 677h3v1h-3zM226 686h1v2h-1zM212 685h3v1h-3zM212 690h3v3h-3zM215 683h1v1h-1zM225 695h1v1h-1zM217 683h1v3h-1zM205 676h1v2h-1zM215 695h3v3h-3zM220 687h1v1h-1zM222 688h1v1h-1zM207 685h1v2h-1zM220 688h2v2h-2zM212 689h2v3h-2zM213 679h1v1h-1zM222 687h3v3h-3zM213 684h2v1h-2zM209 691h2v3h-2zM219 686h2v1h-2zM216 681h1v1h-1zM220 683h3v2h-3zM222 693h3v3h-3zM212 684h3v1h-3zM210 686h2v1h-2zM206 684h2v1h-2zM217 680h1v1h-1zM223 671h3v2h-3zM215 684h3v1h-3zM223 692h3v1h-3zM201 681h1v1h-1zM214 695h2v2h-2zM210 690h2v3h-2zM221 684h1v3h-1zM224 671h2v3h-2zM217 683h2v3h-2zM221 681h2v1h-2zM222 694h1v2h-1zM227 680h3v2h-3zM207 680h2v1h-2zM213 690h2v1h-2zM217 691h2v3h-2zM215 682h2v1h-2zM218 678h2v1h-2zM219 680h1v3h-1zM226 678h1v1h-1zM217 681h1v2h-1zM214 684h2v1h-2zM218 681h2v1h-2zM214 683h1v2h-1zM217 681h2v3h-2zM220 686h2v3h-2zM210 686h3v3h-3zM208 691h1v2h-1zM221 689h2v2h-2zM206 694h2v2h-2zM209 677h2v1h-2zM215 668h3v1h-3zM210 678h1v2h-1zM218 694h1v1h-1zM204 696h2v1h-2zM221 691h2v3h-2zM205 682h2v3h-2zM224 690h3v3h-3zM211 690h2v1h-2zM216 684h3v2h-3zM215 697h2v2h-2zM215 683h2v1h-2zM220 693h1v1h-1zM216 689h2v3h-2zM219 675h3v1h-3zM210 684h1v1h-1zM219 681h2v1h-2zM218 679h2v3h-2zM209 699h2v3h-2zM210 698h2v1h-2zM206 679h1v1h-1zM216 676h2v1h-2zM207 684h1v1h-1zM210 680h3v2h-3zM228 682h1v3h-1zM217 676h1v1h-1zM211 689h1v3h-1zM208 698h1v1h-1zM220 678h1v1h-1zM214 679h1v1h-1zM219 680h1v3h-1zM203 693h1v3h-1zM204 686h3v3h-3zM216 693h1v3h-1zM204 688h2v1h-2zM214 699h2v2h-2zM210 683h1v1h-1zM214 692h2v1h-2zM215 687h3v3h-3zM220 693h2v3h-2zM220 697h2v3h-2zM214 687h1v1h-1zM209 689h1v1h-1zM217 691h1v2h-1zM222 681h2v2h-2zM230 684h2v3h-2zM214 691h2v2h-2zM212 687h3v1h-3zM213 712h1v1h-1zM208 713h2v1h-2zM214 701h2v3h-2zM218 700h1v3h-1zM203 714h2v1h-2zM200 710h3v2h-3zM196 704h2v1h-2zM212 696h2v2h-2zM211 704h2v3h-2zM201 707h1v3h-1zM207 706h1v1h-1zM207 704h1v2h-1zM207 718h1v1h-1zM205 701h2v1h-2zM211 709h1v2h-1zM203 705h1v1h-1zM206 708h1v1h-1zM208 722h1v3h-1zM193 706h2v1h-2zM198 708h1v1h-1zM196 700h1v1h-1zM210 710h3v1h-3zM199 699h2v3h-2zM201 703h1v2h-1zM210 700h2v1h-2zM203 715h2v2h-2zM209 716h3v2h-3zM198 711h3v1h-3zM206 718h1v2h-1zM206 712h1v1h-1zM218 694h3v3h-3zM212 703h2v2h-2zM218 702h2v3h-2zM198 708h1v2h-1zM207 706h1v1h-1zM205 702h3v1h-3zM205 705h1v2h-1zM202 707h2v1h-2zM210 710h2v3h-2zM209 708h2v3h-2zM218 705h2v1h-2zM185 710h1v2h-1zM210 705h1v3h-1zM202 711h2v1h-2zM212 703h1v1h-1zM220 708h1v1h-1zM216 705h2v2h-2zM207 706h1v1h-1zM212 707h2v1h-2zM201 708h2v3h-2zM205 701h1v3h-1zM225 711h1v1h-1zM215 704h2v2h-2zM206 707h1v3h-1zM197 708h3v3h-3zM200 713h2v1h-2zM209 708h3v1h-3zM195 710h2v2h-2zM209 706h2v1h-2zM200 706h1v3h-1zM213 703h1v2h-1zM201 707h2v1h-2zM203 707h1v3h-1zM218 697h2v1h-2zM204 712h2v3h-2zM219 702h2v3h-2zM204 706h2v2h-2zM195 713h2v1h-2zM215 704h3v1h-3zM198 699h1v2h-1zM215 705h2v2h-2zM212 706h2v1h-2zM209 713h1v1h-1zM203 700h2v1h-2zM207 708h1v2h-1zM210 717h1v1h-1zM202 706h1v3h-1zM206 708h1v1h-1zM209 710h2v2h-2zM213 703h1v1h-1zM224 699h2v1h-2zM208 705h2v3h-2zM211 707h2v3h-2zM198 708h2v1h-2zM195 704h1v2h-1zM212 720h1v2h-1zM205 710h1v1h-1zM196 713h1v1h-1zM207 709h2v2h-2zM212 711h2v2h-2zM210 713h2v3h-2zM200 706h2v2h-2zM203 697h2v2h-2zM205 710h3v1h-3zM205 701h1v2h-1zM201 708h1v3h-1zM200 716h1v3h-1zM199 710h3v2h-3zM216 711h2v1h-2zM211 706h1v1h-1zM194 703h2v3h-2zM203 713h2v3h-2zM200 713h1v3h-1zM208 710h2v1h-2zM203 704h1v1h-1zM213 708h2v3h-2zM205 695h1v3h-1zM201 713h3v3h-3zM206 710h2v2h-2zM211 717h2v1h-2zM207 701h2v1h-2zM202 707h1v3h-1zM193 699h2v3h-2zM205 694h1v3h-1zM213 700h2v1h-2zM209 702h2v1h-2zM208 702h2v1h-2zM204 708h3v1h-3zM211 703h1v1h-1zM210 716h3v3h-3zM190 738h3v1h-3zM196 723h3v2h-3zM190 721h3v1h-3zM186 727h2v1h-2zM183 725h1v1h-1zM198 721h1v2h-1zM194 725h2v1h-2zM186 731h1v1h-1zM189 727h1v2h-1zM192 720h1v1h-1zM194 729h3v1h-3zM194 732h1v2h-1zM191 722h3v3h-3zM195 728h2v1h-2zM199 727h2v3h-2zM196 724h3v3h-3zM192 721h3v3h-3zM190 724h2v2h-2zM195 722h2v1h-2zM192 726h2v3h-2zM191 722h2v2h-2zM195 721h1v2h-1zM187 720h2v2h-2zM203 723h2v1h-2zM188 727h2v3h-2zM193 732h3v3h-3zM192 720h1v2h-1zM198 721h3v3h-3zM183 726h3v2h-3zM190 724h3v1h-3zM198 728h1v3h-1zM197 720h2v2h-2zM197 726h2v1h-2zM199 722h2v1h-2zM192 737h1v2h-1zM188 721h1v1h-1zM193 728h2v2h-2zM191 716h1v3h-1zM192 726h1v1h-1zM199 726h3v1h-3zM186 731h2v3h-2zM192 728h2v1h-2zM196 725h1v1h-1zM194 722h1v2h-1zM193 731h3v2h-3zM202 723h2v3h-2zM193 721h3v2h-3zM190 718h1v2h-1zM198 729h1v1h-1zM194 719h2v3h-2zM193 732h1v1h-1zM192 732h1v1h-1zM199 725h2v2h-2zM186 730h2v2h-2zM190 720h1v1h-1zM191 727h2v3h-2zM197 727h3v1h-3zM193 725h1v2h-1zM194 730h3v2h-3zM184 713h2v1h-2zM188 723h2v1h-2zM189 723h3v1h-3zM191 725h3v1h-3zM194 730h2v1h-2zM195 725h1v3h-1zM192 723h3v3h-3zM195 723h2v2h-2zM196 719h2v1h-2zM191 730h2v1h-2zM194 727h2v1h-2zM192 723h2v1h-2zM189 724h2v1h-2zM186 728h3v3h-3zM197 722h2v2h-2zM195 716h1v2h-1zM197 726h2v3h-2zM190 725h2v1h-2zM198 726h2v1h-2zM190 731h3v3h-3zM193 735h3v2h-3zM187 731h2v3h-2zM193 728h1v1h-1zM193 723h2v1h-2zM189 721h2v3h-2zM187 724h3v1h-3zM191 723h1v1h-1zM186 721h1v1h-1zM188 728h1v1h-1zM196 726h2v1h-2zM195 727h2v3h-2zM181 741h1v2h-1zM180 741h1v1h-1zM182 738h2v1h-2zM188 730h2v1h-2zM183 735h3v2h-3zM185 743h1v2h-1zM184 734h1v2h-1zM183 735h2v2h-2zM183 739h1v1h-1zM186 739h1v3h-1zM182 740h3v1h-3zM180 737h2v1h-2zM190 742h2v2h-2zM183 743h3v1h-3zM191 738h2v1h-2zM183 738h2v1h-2zM180 739h2v1h-2zM176 739h2v1h-2zM185 738h2v2h-2zM179 740h2v3h-2zM176 738h1v2h-1zM178 738h2v1h-2zM183 742h1v1h-1zM182 726h2v1h-2zM183 737h1v2h-1zM187 738h1v3h-1zM180 740h1v3h-1zM179 729h3v1h-3zM188 741h1v1h-1zM182 736h1v1h-1zM183 735h3v1h-3zM181 740h3v2h-3zM183 730h1v1h-1zM190 737h2v1h-2zM182 733h3v3h-3zM182 734h2v2h-2zM189 740h3v2h-3zM176 736h2v2h-2zM179 743h1v2h-1zM181 738h2v2h-2zM179 734h3v3h-3zM182 736h2v3h-2zM189 734h2v2h-2zM179 733h3v3h-3zM184 730h2v1h-2zM178 737h1v1h-1zM187 731h3v2h-3zM185 736h1v1h-1zM178 738h2v2h-2zM183 736h2v2h-2zM182 737h2v2h-2zM185 741h3v3h-3zM178 748h2v2h-2zM191 738h1v2h-1zM184 734h2v1h-2zM182 739h2v1h-2zM178 737h3v1h-3zM181 733h3v2h-3zM179 735h2v3h-2zM185 740h2v1h-2zM164 736h1v1h-1zM168 737h1v1h-1zM167 735h2v1h-2zM165 726h1v2h-1zM172 734h2v3h-2zM167 730h3v1h-3zM169 725h2v2h-2zM168 738h2v1h-2zM169 738h2v1h-2zM177 734h3v3h-3zM171 733h2v2h-2zM177 734h2v1h-2zM171 742h1v2h-1zM165 745h2v3h-2zM171 738h1v2h-1zM173 734h3v2h-3zM168 731h2v1h-2zM170 745h2v3h-2zM169 746h1v1h-1zM156 734h1v3h-1zM169 734h3v2h-3zM169 732h1v3h-1zM170 727h2v1h-2zM174 743h2v1h-2zM170 739h3v3h-3zM166 736h2v2h-2zM165 737h3v3h-3zM172 730h1v1h-1zM166 730h1v2h-1zM165 732h1v2h-1zM170 733h1v1h-1zM173 740h1v1h-1zM165 740h1v1h-1zM171 735h2v1h-2zM161 742h1v1h-1zM176 737h3v2h-3zM164 726h1v3h-1zM174 737h1v1h-1zM169 742h2v3h-2zM170 733h1v2h-1zM171 730h1v1h-1zM160 737h1v1h-1zM175 727h3v2h-3zM167 729h2v1h-2zM167 740h3v3h-3zM173 729h3v1h-3zM170 745h3v2h-3zM173 738h2v1h-2zM167 733h1v3h-1zM174 737h1v1h-1zM166 741h2v3h-2zM174 732h1v1h-1zM170 730h3v1h-3zM172 735h1v1h-1zM174 729h3v3h-3zM162 727h2v3h-2zM173 736h3v2h-3zM166 741h3v3h-3zM171 738h3v1h-3zM163 735h1v3h-1zM168 736h3v2h-3zM162 734h2v2h-2zM171 726h1v1h-1zM167 728h3v1h-3zM169 741h2v2h-2zM172 727h3v2h-3zM175 734h2v1h-2zM167 728h2v1h-2zM180 741h3v3h-3zM172 737h3v3h-3zM159 747h2v3h-2zM167 746h2v2h-2zM163 748h1v1h-1zM162 746h2v3h-2zM161 742h1v1h-1zM161 742h1v1h-1zM161 740h2v1h-2zM156 742h2v1h-2zM156 751h3v2h-3zM160 752h1v2h-1zM159 745h1v2h-1zM157 744h2v1h-2zM158 746h2v1h-2zM154 747h1v1h-1zM160 743h1v1h-1zM157 742h3v1h-3zM149 751h2v1h-2zM158 748h2v1h-2zM164 740h2v2h-2zM166 740h1v3h-1zM165 749h2v1h-2zM155 746h2v2h-2zM154 745h1v1h-1zM162 737h3v1h-3zM158 755h1v1h-1zM161 740h1v1h-1zM160 751h2v1h-2zM165 749h2v1h-2zM158 749h2v1h-2zM155 749h2v3h-2zM150 741h1v2h-1zM157 743h2v3h-2zM159 750h1v2h-1zM162 749h1v2h-1zM157 744h1v2h-1zM161 745h2v2h-2zM160 749h1v1h-1zM154 742h2v2h-2zM152 748h2v1h-2zM162 741h2v1h-2zM161 741h2v3h-2zM159 749h1v1h-1zM161 748h3v1h-3zM158 743h3v3h-3zM158 749h2v1h-2zM161 741h2v2h-2zM163 752h1v1h-1zM158 743h1v1h-1zM154 747h3v3h-3zM155 745h2v1h-2zM225 747h3v3h-3zM222 741h2v3h-2zM224 744h2v1h-2zM225 746h2v3h-2zM223 749h1v2h-1zM228 747h2v3h-2zM221 745h2v1h-2zM223 747h1v2h-1zM226 747h1v2h-1zM221 744h2v3h-2zM224 742h2v3h-2zM224 741h3v3h-3zM223 745h1v1h-1zM226 747h3v3h-3zM225 752h1v1h-1zM221 745h1v2h-1zM223 744h2v1h-2zM224 746h1v1h-1zM221 744h2v2h-2zM229 743h2v2h-2zM221 750h2v1h-2zM223 751h2v1h-2zM223 747h2v1h-2zM225 745h2v3h-2zM225 741h2v2h-2zM227 746h1v1h-1zM230 748h2v3h-2zM221 744h2v1h-2zM225 745h1v2h-1zM228 743h1v2h-1zM230 755h1v3h-1zM234 759h1v1h-1zM233 754h2v3h-2zM231 758h3v3h-3zM234 752h2v3h-2zM234 755h1v3h-1zM235 751h1v3h-1zM236 753h1v1h-1zM231 750h2v2h-2zM234 754h3v2h-3zM232 756h1v2h-1zM235 751h1v3h-1zM232 755h3v3h-3zM237 754h2v2h-2zM229 756h2v2h-2zM232 756h3v3h-3zM234 756h3v1h-3zM234 751h1v2h-1zM232 750h1v1h-1zM233 754h3v3h-3zM231 754h3v1h-3zM228 751h3v2h-3zM229 757h3v3h-3zM238 757h2v3h-2zM233 756h2v1h-2zM122 756h1v2h-1zM130 743h3v2h-3zM124 745h2v3h-2zM136 746h2v3h-2zM121 747h2v1h-2zM132 745h2v3h-2zM141 747h2v1h-2zM127 746h2v3h-2zM119 744h3v2h-3zM131 746h1v1h-1zM126 742h2v1h-2zM128 752h2v1h-2zM134 744h3v3h-3zM134 749h2v1h-2zM127 736h1v1h-1zM129 757h1v1h-1zM120 739h3v1h-3zM130 743h1v3h-1zM129 757h1v1h-1zM134 754h3v3h-3zM138 751h1v1h-1zM127 748h2v3h-2zM127 741h2v2h-2zM140 747h1v3h-1zM115 751h3v2h-3zM132 743h1v2h-1zM133 746h2v1h-2zM138 746h3v2h-3zM137 753h1v2h-1zM135 748h3v1h-3zM129 748h1v2h-1zM123 749h2v2h-2zM133 729h3v1h-3zM131 757h3v1h-3zM134 760h3v3h-3zM134 745h1v1h-1zM137 743h2v1h-2zM134 752h1v1h-1zM134 756h3v2h-3zM125 745h3v2h-3zM129 748h1v2h-1zM131 745h1v1h-1zM133 751h3v1h-3zM132 751h2v1h-2zM131 735h2v1h-2zM123 742h3v1h-3zM128 742h2v3h-2zM131 743h3v1h-3zM122 743h1v3h-1zM123 746h1v1h-1zM132 761h2v1h-2zM142 750h1v3h-1zM129 752h1v1h-1zM124 746h3v3h-3zM123 754h1v3h-1zM127 749h1v2h-1zM135 749h2v3h-2zM126 737h1v2h-1zM132 751h1v2h-1zM126 757h1v1h-1zM134 746h2v2h-2zM137 745h1v1h-1zM130 751h2v2h-2zM128 738h2v3h-2zM120 751h2v2h-2zM118 749h2v3h-2zM128 746h3v3h-3zM129 737h3v1h-3zM133 747h2v1h-2zM129 751h3v2h-3zM93 746h2v1h-2zM90 746h3v2h-3zM93 745h2v3h-2zM88 760h1v1h-1zM91 738h1v3h-1zM93 747h1v1h-1zM88 750h3v2h-3zM96 753h2v1h-2zM92 744h1v2h-1zM87 751h1v1h-1zM99 760h2v1h-2zM81 745h2v2h-2zM90 748h2v1h-2zM90 750h1v2h-1zM85 747h1v3h-1zM91 748h1v1h-1zM90 758h1v1h-1zM97 751h1v1h-1zM92 755h1v3h-1zM90 756h1v1h-1zM99 748h1v3h-1zM97 748h1v3h-1zM93 752h2v3h-2zM98 752h1v1h-1zM86 756h1v1h-1zM95 747h3v1h-3zM94 747h2v1h-2zM93 743h1v3h-1zM90 750h2v2h-2zM93 746h2v3h-2zM84 747h3v1h-3zM87 753h2v3h-2zM89 758h2v1h-2zM84 752h2v2h-2zM87 752h2v1h-2zM95 751h3v3h-3zM95 756h1v1h-1zM94 741h3v1h-3zM97 743h3v1h-3zM88 745h1v1h-1zM89 749h3v2h-3zM99 748h1v1h-1zM89 755h3v2h-3zM101 762h2v2h-2zM86 755h1v1h-1zM93 753h1v1h-1zM89 750h2v3h-2zM98 755h1v3h-1zM94 752h1v1h-1zM91 747h2v3h-2zM77 741h3v2h-3zM74 746h1v1h-1zM76 745h2v1h-2zM75 742h2v1h-2zM69 745h2v1h-2zM79 740h2v2h-2zM74 744h1v3h-1zM79 744h1v2h-1zM78 744h1v3h-1zM70 745h3v1h-3zM75 747h1v1h-1zM75 745h1v2h-1zM80 740h1v1h-1zM75 743h1v2h-1zM72 742h1v1h-1zM74 748h2v3h-2zM77 745h2v3h-2zM72 744h1v1h-1zM72 746h1v2h-1zM78 738h2v1h-2zM80 748h3v3h-3zM73 742h3v1h-3zM74 745h2v1h-2zM73 736h3v1h-3zM75 744h1v1h-1zM117 746h3v1h-3zM116 744h1v2h-1zM116 752h1v3h-1zM119 751h2v3h-2zM115 754h3v3h-3zM118 756h2v3h-2zM115 753h3v2h-3zM121 757h1v3h-1zM119 751h1v2h-1zM114 753h1v1h-1zM115 748h1v1h-1zM115 751h1v1h-1zM112 754h3v2h-3zM117 759h1v1h-1zM118 748h1v3h-1zM113 752h2v3h-2zM116 752h1v1h-1zM114 751h2v1h-2zM112 755h2v1h-2zM114 752h3v1h-3zM116 753h1v2h-1zM115 755h2v2h-2zM117 749h2v1h-2zM118 752h1v1h-1zM112 757h1v1h-1zM121 747h1v1h-1zM113 749h1v3h-1zM107 755h2v1h-2zM107 754h2v1h-2zM118 742h3v1h-3zM121 746h1v2h-1zM110 757h2v1h-2zM120 745h1v1h-1zM120 746h1v3h-1zM109 749h2v3h-2zM111 750h2v1h-2zM117 747h1v1h-1zM118 750h2v2h-2zM114 759h1v2h-1zM112 751h1v3h-1z" fill="#000"/>
<path d="M250.3 678.4 L253.8 692.5 L251.7 706.5 L243.2 720.6 L234.1 727.6 L225.0 733.3 M257.3 660.8 L267.9 662.6 L278.4 664.4 L285.4 665.2 M229.2 662.6 L234.5 661.7 M241.5 664.4 L250.3 661.7 M292.5 661.7 L303.0 661.2 L307.4 660.0" fill="none" stroke="#000" stroke-width="1.2" stroke-dasharray="5 2"/>
<circle cx="407" cy="407" r="159.6" fill="none" stroke="#dadada" stroke-width="0.96" mask="url(#rm)"/>
<circle cx="407" cy="407" r="279.7" fill="none" stroke="#dadada" stroke-width="0.96" mask="url(#rm)"/>
<circle cx="407" cy="407" r="399.6" fill="none" stroke="#dadada" stroke-width="0.96" mask="url(#rm)"/>
<circle cx="407" cy="407" r="519.5" fill="none" stroke="#dadada" stroke-width="0.96" mask="url(#rm)"/>
<circle cx="407" cy="407" r="40" fill="none" stroke="#e80000" stroke-width="0.96"/>
</g><g clip-path="url(#mapclip)">
<text x="405.5" y="11.5" font-size="10" fill="#ffff90" text-anchor="middle" textLength="20" lengthAdjust="spacingAndGlyphs" font-family='"DejaVu Sans","Liberation Sans",sans-serif'>313</text>
<text x="405.5" y="131" font-size="10" fill="#ffff90" text-anchor="middle" textLength="20" lengthAdjust="spacingAndGlyphs" font-family='"DejaVu Sans","Liberation Sans",sans-serif'>219</text>
<text x="405.5" y="251" font-size="10" fill="#ffff90" text-anchor="middle" textLength="20" lengthAdjust="spacingAndGlyphs" font-family='"DejaVu Sans","Liberation Sans",sans-serif'>125</text>
<text x="405.5" y="371.5" font-size="10" fill="#ffff90" text-anchor="middle" textLength="13" lengthAdjust="spacingAndGlyphs" font-family='"DejaVu Sans","Liberation Sans",sans-serif'>31</text>
<circle cx="762.5" cy="436.5" r="4" fill="none" stroke="#f0b418" stroke-width="1.2"/>
<path d="M760.0 436.5H765.0 M762.5 434.0V439.0" stroke="#f0b418" stroke-width="1.2"/>
<circle cx="708.5" cy="550.5" r="4" fill="none" stroke="#f0a020" stroke-width="1.2"/>
<path d="M706.0 550.5H711.0" stroke="#f0a020" stroke-width="1.2"/>
<circle cx="709.5" cy="562.5" r="4" fill="none" stroke="#f0a020" stroke-width="1.2"/>
<path d="M707.0 562.5H712.0" stroke="#f0a020" stroke-width="1.2"/>
<circle cx="738.5" cy="546.5" r="4" fill="none" stroke="#f0c010" stroke-width="1.2"/>
<path d="M736.0 546.5H741.0" stroke="#f0c010" stroke-width="1.2"/>
<path d="M763.5 550.5H770.5" stroke="#f0a010" stroke-width="1.3"/>
<circle cx="755.5" cy="735.5" r="4" fill="none" stroke="#f0a020" stroke-width="1.2"/>
<path d="M753.0 735.5H758.0" stroke="#f0a020" stroke-width="1.2"/>
</g>
<rect x="8" y="758" width="245" height="46" fill="#000"/>
<rect x="9.5" y="759.5" width="243" height="43" fill="none" stroke="#8c8c8c" stroke-width="1"/>
<text x="13.5" y="771" font-size="11" fill="#e6e6e6" textLength="35" lengthAdjust="spacingAndGlyphs" font-family='"DejaVu Sans","Liberation Sans",sans-serif'>Symbols</text>
<text x="53" y="771" font-size="11" fill="#e6e6e6" textLength="17.5" lengthAdjust="spacingAndGlyphs" font-family='"DejaVu Sans","Liberation Sans",sans-serif'>-CG</text>
<text x="78.5" y="771" font-size="11" fill="#e6e6e6" textLength="14" lengthAdjust="spacingAndGlyphs" font-family='"DejaVu Sans","Liberation Sans",sans-serif'>-IC</text>
<text x="99" y="771" font-size="11" fill="#e6e6e6" textLength="20" lengthAdjust="spacingAndGlyphs" font-family='"DejaVu Sans","Liberation Sans",sans-serif'>+CG</text>
<text x="124" y="771" font-size="11" fill="#e6e6e6" textLength="17.5" lengthAdjust="spacingAndGlyphs" font-family='"DejaVu Sans","Liberation Sans",sans-serif'>+IC</text>
<text x="153.5" y="771" font-size="11" fill="#e6e6e6" textLength="89.5" lengthAdjust="spacingAndGlyphs" font-family='"DejaVu Sans","Liberation Sans",sans-serif'>Strike age color codes</text>
<text x="13.5" y="784" font-size="11" fill="#e6e6e6" textLength="27.5" lengthAdjust="spacingAndGlyphs" font-family='"DejaVu Sans","Liberation Sans",sans-serif'>Recent</text>
<text x="13.5" y="796.5" font-size="11" fill="#e6e6e6" textLength="14" lengthAdjust="spacingAndGlyphs" font-family='"DejaVu Sans","Liberation Sans",sans-serif'>Old</text>
<circle cx="60.5" cy="780.5" r="4" fill="none" stroke="#00e0e8" stroke-width="1.2"/>
<path d="M58.0 780.5H63.0" stroke="#00e0e8" stroke-width="1.2"/>
<path d="M81.5 780.5H88.5" stroke="#00e0e8" stroke-width="1.3"/>
<circle cx="110.5" cy="780.5" r="4" fill="none" stroke="#00e0e8" stroke-width="1.2"/>
<path d="M108.0 780.5H113.0 M110.5 778.0V783.0" stroke="#00e0e8" stroke-width="1.2"/>
<path d="M132.0 780.5H139.0 M135.5 777.0V784.0" stroke="#00e0e8" stroke-width="1.3"/>
<circle cx="60.5" cy="793.5" r="4" fill="none" stroke="#f0f000" stroke-width="1.2"/>
<path d="M58.0 793.5H63.0" stroke="#f0f000" stroke-width="1.2"/>
<path d="M81.5 793.5H88.5" stroke="#f0f000" stroke-width="1.3"/>
<circle cx="110.5" cy="793.5" r="4" fill="none" stroke="#f0f000" stroke-width="1.2"/>
<path d="M108.0 793.5H113.0 M110.5 791.0V796.0" stroke="#f0f000" stroke-width="1.2"/>
<path d="M132.0 793.5H139.0 M135.5 790.0V797.0" stroke="#f0f000" stroke-width="1.3"/>
<text x="153.5" y="784" font-size="11" fill="#f0e000" textLength="16.5" lengthAdjust="spacingAndGlyphs" font-family='"DejaVu Sans","Liberation Sans",sans-serif'>15+</text>
<text x="188.5" y="784" font-size="11" fill="#e8a800" textLength="16.5" lengthAdjust="spacingAndGlyphs" font-family='"DejaVu Sans","Liberation Sans",sans-serif'>30+</text>
<text x="223.5" y="784" font-size="11" fill="#f09000" textLength="16.5" lengthAdjust="spacingAndGlyphs" font-family='"DejaVu Sans","Liberation Sans",sans-serif'>45+</text>
<text x="153.5" y="796.5" font-size="11" fill="#e87000" textLength="16.5" lengthAdjust="spacingAndGlyphs" font-family='"DejaVu Sans","Liberation Sans",sans-serif'>60+</text>
<text x="188.5" y="796.5" font-size="11" fill="#e85000" textLength="16.5" lengthAdjust="spacingAndGlyphs" font-family='"DejaVu Sans","Liberation Sans",sans-serif'>75+</text>
<text x="223.5" y="796.5" font-size="11" fill="#e83000" textLength="16.5" lengthAdjust="spacingAndGlyphs" font-family='"DejaVu Sans","Liberation Sans",sans-serif'>90+</text>
<rect x="685" y="792" width="121" height="14" fill="#000"/>
<text x="689" y="803" font-size="10" fill="#fff" textLength="113" lengthAdjust="spacingAndGlyphs" font-family='"DejaVu Sans","Liberation Sans",sans-serif'>©2005 Astrogenic Systems</text>
<rect x="812.5" y="8.5" width="319" height="319" fill="#000" stroke="#c6c6c6" stroke-width="1" rx="4.5"/>
<rect x="812.5" y="333.5" width="319" height="114" fill="#000" stroke="#c6c6c6" stroke-width="1" rx="4.5"/>
<rect x="812.5" y="453.5" width="319" height="349" fill="#000" stroke="#c6c6c6" stroke-width="1" rx="4.5"/>
<rect x="819.5" y="16.5" width="57" height="17" fill="#5a0000" stroke="#d0d0d0" stroke-width="1"/>
<text x="848" y="29.5" font-size="13" fill="#d8d8d8" text-anchor="middle" textLength="49" lengthAdjust="spacingAndGlyphs" font-weight="bold" font-family='"Liberation Serif","DejaVu Serif",serif'>STRIKE</text>
<rect x="883.5" y="16.5" width="57" height="17" fill="#333" stroke="#d0d0d0" stroke-width="1"/>
<text x="912" y="29.5" font-size="13" fill="#c8c8c8" text-anchor="middle" textLength="44" lengthAdjust="spacingAndGlyphs" font-weight="bold" font-family='"Liberation Serif","DejaVu Serif",serif'>NOISE</text>
<rect x="994.5" y="16.5" width="127" height="17" fill="#333" stroke="#d0d0d0" stroke-width="1"/>
<text x="998" y="29.5" font-size="12" fill="#fff" textLength="63" lengthAdjust="spacingAndGlyphs" font-weight="bold" font-family='"DejaVu Sans","Liberation Sans",sans-serif'>Bng 147°</text>
<text x="1118" y="29.5" font-size="12" fill="#00e800" text-anchor="end" textLength="43" lengthAdjust="spacingAndGlyphs" font-weight="bold" font-family='"DejaVu Sans","Liberation Sans",sans-serif'>416mi</text>
<rect x="821.5" y="64.5" width="81" height="15" fill="#555" stroke="#d0d0d0" stroke-width="1"/>
<text x="862" y="76" font-size="11.5" fill="#e8e8e8" text-anchor="middle" textLength="67" lengthAdjust="spacingAndGlyphs" font-family='"DejaVu Sans","Liberation Sans",sans-serif'>Strikes/min</text>
<text x="903" y="112" font-size="28" fill="#fff" text-anchor="end" textLength="19" lengthAdjust="spacingAndGlyphs" font-weight="bold" font-family='"DejaVu Sans","Liberation Sans",sans-serif'>0</text>
<rect x="931.5" y="64.5" width="81" height="15" fill="#555" stroke="#d0d0d0" stroke-width="1"/>
<text x="972" y="76" font-size="11.5" fill="#e8e8e8" text-anchor="middle" textLength="58" lengthAdjust="spacingAndGlyphs" font-family='"DejaVu Sans","Liberation Sans",sans-serif'>Close/min</text>
<text x="1013" y="112" font-size="28" fill="#fff" text-anchor="end" textLength="19" lengthAdjust="spacingAndGlyphs" font-weight="bold" font-family='"DejaVu Sans","Liberation Sans",sans-serif'>0</text>
<rect x="1041.5" y="64.5" width="81" height="15" fill="#555" stroke="#d0d0d0" stroke-width="1"/>
<text x="1082" y="76" font-size="11.5" fill="#e8e8e8" text-anchor="middle" textLength="63" lengthAdjust="spacingAndGlyphs" font-family='"DejaVu Sans","Liberation Sans",sans-serif'>Noises/min</text>
<text x="1123" y="112" font-size="28" fill="#c0c0c0" text-anchor="end" textLength="19" lengthAdjust="spacingAndGlyphs" font-weight="bold" font-family='"DejaVu Sans","Liberation Sans",sans-serif'>0</text>
<text x="903" y="143" font-size="13" fill="#fff" text-anchor="end" textLength="77" lengthAdjust="spacingAndGlyphs" font-family='"DejaVu Sans","Liberation Sans",sans-serif'>Total Strikes</text>
<text x="903" y="160.5" font-size="11.5" fill="#fff" text-anchor="end" font-family='"DejaVu Sans","Liberation Sans",sans-serif'>0</text>
<text x="1013" y="143" font-size="13" fill="#fff" text-anchor="end" textLength="69" lengthAdjust="spacingAndGlyphs" font-family='"DejaVu Sans","Liberation Sans",sans-serif'>Total Close</text>
<text x="1013" y="160.5" font-size="11.5" fill="#fff" text-anchor="end" font-family='"DejaVu Sans","Liberation Sans",sans-serif'>0</text>
<text x="1123" y="143" font-size="13" fill="#c0c0c0" text-anchor="end" textLength="76" lengthAdjust="spacingAndGlyphs" font-family='"DejaVu Sans","Liberation Sans",sans-serif'>Total Noises</text>
<text x="1123" y="160.5" font-size="11.5" fill="#c0c0c0" text-anchor="end" font-family='"DejaVu Sans","Liberation Sans",sans-serif'>1</text>
<text x="821" y="214.5" font-size="13" fill="#c0c0c0" textLength="165" lengthAdjust="spacingAndGlyphs" font-family='"DejaVu Sans","Liberation Sans",sans-serif'>Lightning type distribution</text>
<line x1="821" y1="217.5" x2="1124" y2="217.5" stroke="#909090" stroke-width="1"/>
<text x="821" y="236.7" font-size="12.5" fill="#fff" textLength="84" lengthAdjust="spacingAndGlyphs" font-weight="bold" font-family='"DejaVu Sans Condensed","DejaVu Sans","Liberation Sans",sans-serif'>Cloud-ground</text>
<text x="913" y="236.7" font-size="12.5" fill="#fff" textLength="9" lengthAdjust="spacingAndGlyphs" font-weight="bold" font-family='"DejaVu Sans Condensed","DejaVu Sans","Liberation Sans",sans-serif'>+</text>
<rect x="925.5" y="227.5" width="50" height="10.5" fill="#000" stroke="#b0b0b0" stroke-width="1" rx="2"/>
<text x="979" y="236.7" font-size="12.5" fill="#fff" textLength="22" lengthAdjust="spacingAndGlyphs" font-weight="bold" font-family='"DejaVu Sans Condensed","DejaVu Sans","Liberation Sans",sans-serif'>0%</text>
<text x="1015.5" y="236.7" font-size="12.5" fill="#fff" textLength="9" lengthAdjust="spacingAndGlyphs" font-weight="bold" font-family='"DejaVu Sans Condensed","DejaVu Sans","Liberation Sans",sans-serif'>−</text>
<rect x="1028.5" y="227.5" width="50" height="10.5" fill="#000" stroke="#b0b0b0" stroke-width="1" rx="2"/>
<text x="1081.5" y="236.7" font-size="12.5" fill="#fff" textLength="22" lengthAdjust="spacingAndGlyphs" font-weight="bold" font-family='"DejaVu Sans Condensed","DejaVu Sans","Liberation Sans",sans-serif'>0%</text>
<text x="821" y="260.7" font-size="12.5" fill="#c0c0c0" textLength="38" lengthAdjust="spacingAndGlyphs" font-weight="bold" font-family='"DejaVu Sans Condensed","DejaVu Sans","Liberation Sans",sans-serif'>Count</text>
<text x="925.5" y="260.7" font-size="12.5" fill="#fff" font-weight="bold" font-family='"DejaVu Sans Condensed","DejaVu Sans","Liberation Sans",sans-serif'>0</text>
<text x="1028" y="260.7" font-size="12.5" fill="#fff" font-weight="bold" font-family='"DejaVu Sans Condensed","DejaVu Sans","Liberation Sans",sans-serif'>0</text>
<text x="821" y="290.7" font-size="12.5" fill="#fff" textLength="64" lengthAdjust="spacingAndGlyphs" font-weight="bold" font-family='"DejaVu Sans Condensed","DejaVu Sans","Liberation Sans",sans-serif'>Intracloud</text>
<text x="913" y="290.7" font-size="12.5" fill="#fff" textLength="9" lengthAdjust="spacingAndGlyphs" font-weight="bold" font-family='"DejaVu Sans Condensed","DejaVu Sans","Liberation Sans",sans-serif'>+</text>
<rect x="925.5" y="281.5" width="50" height="10.5" fill="#000" stroke="#b0b0b0" stroke-width="1" rx="2"/>
<text x="979" y="290.7" font-size="12.5" fill="#fff" textLength="22" lengthAdjust="spacingAndGlyphs" font-weight="bold" font-family='"DejaVu Sans Condensed","DejaVu Sans","Liberation Sans",sans-serif'>0%</text>
<text x="1015.5" y="290.7" font-size="12.5" fill="#fff" textLength="9" lengthAdjust="spacingAndGlyphs" font-weight="bold" font-family='"DejaVu Sans Condensed","DejaVu Sans","Liberation Sans",sans-serif'>−</text>
<rect x="1028.5" y="281.5" width="50" height="10.5" fill="#000" stroke="#b0b0b0" stroke-width="1" rx="2"/>
<text x="1081.5" y="290.7" font-size="12.5" fill="#fff" textLength="22" lengthAdjust="spacingAndGlyphs" font-weight="bold" font-family='"DejaVu Sans Condensed","DejaVu Sans","Liberation Sans",sans-serif'>0%</text>
<text x="821" y="314.7" font-size="12.5" fill="#c0c0c0" textLength="38" lengthAdjust="spacingAndGlyphs" font-weight="bold" font-family='"DejaVu Sans Condensed","DejaVu Sans","Liberation Sans",sans-serif'>Count</text>
<text x="925.5" y="314.7" font-size="12.5" fill="#fff" font-weight="bold" font-family='"DejaVu Sans Condensed","DejaVu Sans","Liberation Sans",sans-serif'>0</text>
<text x="1028" y="314.7" font-size="12.5" fill="#fff" font-weight="bold" font-family='"DejaVu Sans Condensed","DejaVu Sans","Liberation Sans",sans-serif'>0</text>
<text x="821" y="353" font-size="16.4" fill="#00e800" textLength="214" lengthAdjust="spacingAndGlyphs" font-weight="bold" font-family='"DejaVu Sans","Liberation Sans",sans-serif'>3/20/2026 12:10:18 AM</text>
<line x1="821" y1="358.5" x2="1124" y2="358.5" stroke="#909090" stroke-width="1"/>
<text x="821" y="387.6" font-size="13" fill="#fff" textLength="49.4" lengthAdjust="spacingAndGlyphs" font-family='"DejaVu Sans","Liberation Sans",sans-serif'>Squelch</text>
<text x="909.5" y="387.6" font-size="13" fill="#fff" font-family='"DejaVu Sans","Liberation Sans",sans-serif'>0</text>
<text x="981.5" y="387.6" font-size="13" fill="#fff" textLength="44.4" lengthAdjust="spacingAndGlyphs" font-family='"DejaVu Sans","Liberation Sans",sans-serif'>Upload</text>
<text x="1061" y="387.6" font-size="13" fill="#c0c0c0" textLength="55.0" lengthAdjust="spacingAndGlyphs" font-family='"DejaVu Sans","Liberation Sans",sans-serif'>Disabled</text>
<text x="821" y="407.7" font-size="13" fill="#fff" textLength="73.3" lengthAdjust="spacingAndGlyphs" font-family='"DejaVu Sans","Liberation Sans",sans-serif'>Persistence</text>
<text x="909.5" y="407.7" font-size="13" fill="#fff" textLength="42.6" lengthAdjust="spacingAndGlyphs" font-family='"DejaVu Sans","Liberation Sans",sans-serif'>90 min</text>
<text x="981.5" y="407.7" font-size="13" fill="#fff" textLength="51.7" lengthAdjust="spacingAndGlyphs" font-family='"DejaVu Sans","Liberation Sans",sans-serif'>Capture</text>
<text x="1061" y="407.7" font-size="13" fill="#00e000" textLength="37.9" lengthAdjust="spacingAndGlyphs" font-family='"DejaVu Sans","Liberation Sans",sans-serif'>Active</text>
<text x="821" y="427.6" font-size="13" fill="#fff" textLength="40.8" lengthAdjust="spacingAndGlyphs" font-family='"DejaVu Sans","Liberation Sans",sans-serif'>Range</text>
<text x="909.5" y="427.6" font-size="13" fill="#fff" textLength="42.6" lengthAdjust="spacingAndGlyphs" font-family='"DejaVu Sans","Liberation Sans",sans-serif'>313 mi</text>
<text x="981.5" y="427.6" font-size="13" fill="#fff" textLength="53.8" lengthAdjust="spacingAndGlyphs" font-family='"DejaVu Sans","Liberation Sans",sans-serif'>Receiver</text>
<text x="1061" y="427.6" font-size="13" fill="#00e000" textLength="51.5" lengthAdjust="spacingAndGlyphs" font-family='"DejaVu Sans","Liberation Sans",sans-serif'>Enabled</text>
<text x="821" y="475" font-size="13" fill="#c0c0c0" textLength="44.4" lengthAdjust="spacingAndGlyphs" font-family='"DejaVu Sans","Liberation Sans",sans-serif'>Uptime</text>
<text x="909.5" y="475" font-size="13" fill="#fff" textLength="52.6" lengthAdjust="spacingAndGlyphs" font-family='"DejaVu Sans","Liberation Sans",sans-serif'>1595:55</text>
<text x="981.5" y="475" font-size="13" fill="#c0c0c0" textLength="62.1" lengthAdjust="spacingAndGlyphs" font-family='"DejaVu Sans","Liberation Sans",sans-serif'>Peak time</text>
<text x="1061" y="475" font-size="13" fill="#c0c0c0" textLength="24.8" lengthAdjust="spacingAndGlyphs" font-family='"DejaVu Sans","Liberation Sans",sans-serif'>Plot</text>
<text x="821" y="498" font-size="13" fill="#c0c0c0" textLength="61.5" lengthAdjust="spacingAndGlyphs" font-family='"DejaVu Sans","Liberation Sans",sans-serif'>Peak rate</text>
<text x="909.5" y="498" font-size="13" fill="#fff" textLength="35.5" lengthAdjust="spacingAndGlyphs" font-family='"DejaVu Sans","Liberation Sans",sans-serif'>0/min</text>
<text x="981.5" y="498" font-size="13" fill="#fff" textLength="58.5" lengthAdjust="spacingAndGlyphs" font-family='"DejaVu Sans","Liberation Sans",sans-serif'>12:10 AM</text>
<text x="1061" y="498" font-size="13" fill="#fff" textLength="36.7" lengthAdjust="spacingAndGlyphs" font-family='"DejaVu Sans","Liberation Sans",sans-serif'>Strike</text>
<text x="822" y="528" font-size="13" fill="#c0c0c0" textLength="77.5" lengthAdjust="spacingAndGlyphs" font-family='"DejaVu Sans","Liberation Sans",sans-serif'>Trend graph</text>
<text x="908.5" y="528" font-size="13" fill="#fff" textLength="42.3" lengthAdjust="spacingAndGlyphs" font-family='"DejaVu Sans","Liberation Sans",sans-serif'>60 min</text>
<line x1="1088.5" y1="542" x2="1088.5" y2="778" stroke="#d0d0d0" stroke-width="1"/>
<line x1="822" y1="777.5" x2="1089" y2="777.5" stroke="#d0d0d0" stroke-width="1"/>
<line x1="1084" y1="542.5" x2="1088" y2="542.5" stroke="#d0d0d0" stroke-width="1"/>
<line x1="1084" y1="581.5" x2="1088" y2="581.5" stroke="#d0d0d0" stroke-width="1"/>
<line x1="1084" y1="620.5" x2="1088" y2="620.5" stroke="#d0d0d0" stroke-width="1"/>
<line x1="1084" y1="659.5" x2="1088" y2="659.5" stroke="#d0d0d0" stroke-width="1"/>
<line x1="1084" y1="699.5" x2="1088" y2="699.5" stroke="#d0d0d0" stroke-width="1"/>
<line x1="1084" y1="738.5" x2="1088" y2="738.5" stroke="#d0d0d0" stroke-width="1"/>
<text x="1092" y="547.0" font-size="11.5" fill="#c0c0c0" textLength="13.8" lengthAdjust="spacingAndGlyphs" font-family='"DejaVu Sans","Liberation Sans",sans-serif'>30</text>
<text x="1092" y="625.0" font-size="11.5" fill="#c0c0c0" textLength="13.8" lengthAdjust="spacingAndGlyphs" font-family='"DejaVu Sans","Liberation Sans",sans-serif'>20</text>
<text x="1092" y="703.5" font-size="11.5" fill="#c0c0c0" textLength="13.8" lengthAdjust="spacingAndGlyphs" font-family='"DejaVu Sans","Liberation Sans",sans-serif'>10</text>
<line x1="822.5" y1="775" x2="822.5" y2="779" stroke="#d0d0d0" stroke-width="1"/>
<line x1="866.5" y1="775" x2="866.5" y2="779" stroke="#d0d0d0" stroke-width="1"/>
<line x1="911.5" y1="775" x2="911.5" y2="779" stroke="#d0d0d0" stroke-width="1"/>
<line x1="955.5" y1="775" x2="955.5" y2="779" stroke="#d0d0d0" stroke-width="1"/>
<line x1="999.5" y1="775" x2="999.5" y2="779" stroke="#d0d0d0" stroke-width="1"/>
<line x1="1044.5" y1="775" x2="1044.5" y2="779" stroke="#d0d0d0" stroke-width="1"/>
<line x1="1088.5" y1="775" x2="1088.5" y2="779" stroke="#d0d0d0" stroke-width="1"/>
<text x="820" y="793" font-size="11.5" fill="#c0c0c0" textLength="14" lengthAdjust="spacingAndGlyphs" font-family='"DejaVu Sans","Liberation Sans",sans-serif'>60</text>
<text x="864.3" y="793" font-size="11.5" fill="#c0c0c0" textLength="14" lengthAdjust="spacingAndGlyphs" font-family='"DejaVu Sans","Liberation Sans",sans-serif'>50</text>
<text x="909" y="793" font-size="11.5" fill="#c0c0c0" textLength="14" lengthAdjust="spacingAndGlyphs" font-family='"DejaVu Sans","Liberation Sans",sans-serif'>40</text>
<text x="953.5" y="793" font-size="11.5" fill="#c0c0c0" textLength="14" lengthAdjust="spacingAndGlyphs" font-family='"DejaVu Sans","Liberation Sans",sans-serif'>30</text>
<text x="997.5" y="793" font-size="11.5" fill="#c0c0c0" textLength="14" lengthAdjust="spacingAndGlyphs" font-family='"DejaVu Sans","Liberation Sans",sans-serif'>20</text>
<text x="1042" y="793" font-size="11.5" fill="#c0c0c0" textLength="14" lengthAdjust="spacingAndGlyphs" font-family='"DejaVu Sans","Liberation Sans",sans-serif'>10</text>
<text x="1087.3" y="793" font-size="11.5" fill="#c0c0c0" font-family='"DejaVu Sans","Liberation Sans",sans-serif'>0</text>
<text x="1100" y="793" font-size="11.5" fill="#c0c0c0" textLength="19" lengthAdjust="spacingAndGlyphs" font-family='"DejaVu Sans","Liberation Sans",sans-serif'>min</text>
<path d="M847.0 777.5 L849.0 769.5 L852.5 769.5 L853.5 777.5" fill="none" stroke="#fff" stroke-width="1"/>
<path d="M862.0 777.5 L864.0 769.5 L867.5 769.5 L868.5 777.5" fill="none" stroke="#fff" stroke-width="1"/>
<path d="M880.0 777.5 L882.0 769.5 L885.5 769.5 L886.5 777.5" fill="none" stroke="#fff" stroke-width="1"/>
<path d="M894.0 777.5 L896.0 769.5 L899.5 769.5 L900.5 777.5" fill="none" stroke="#fff" stroke-width="1"/>
<path d="M939.0 777.5 L941.0 769.5 L944.5 769.5 L945.5 777.5" fill="none" stroke="#fff" stroke-width="1"/>
<path d="M945.0 777.5 L947.0 769.5 L950.5 769.5 L951.5 777.5" fill="none" stroke="#fff" stroke-width="1"/>
<path d="M957.0 777.5 L959.0 769.5 L962.5 769.5 L963.5 777.5" fill="none" stroke="#fff" stroke-width="1"/>
<path d="M999.0 777.5 L1001.0 769.5 L1004.5 769.5 L1005.5 777.5" fill="none" stroke="#fff" stroke-width="1"/>
<path d="M1010.0 777.5 L1012.0 769.5 L1015.5 769.5 L1016.5 777.5" fill="none" stroke="#fff" stroke-width="1"/>
</svg>
</body></html>
